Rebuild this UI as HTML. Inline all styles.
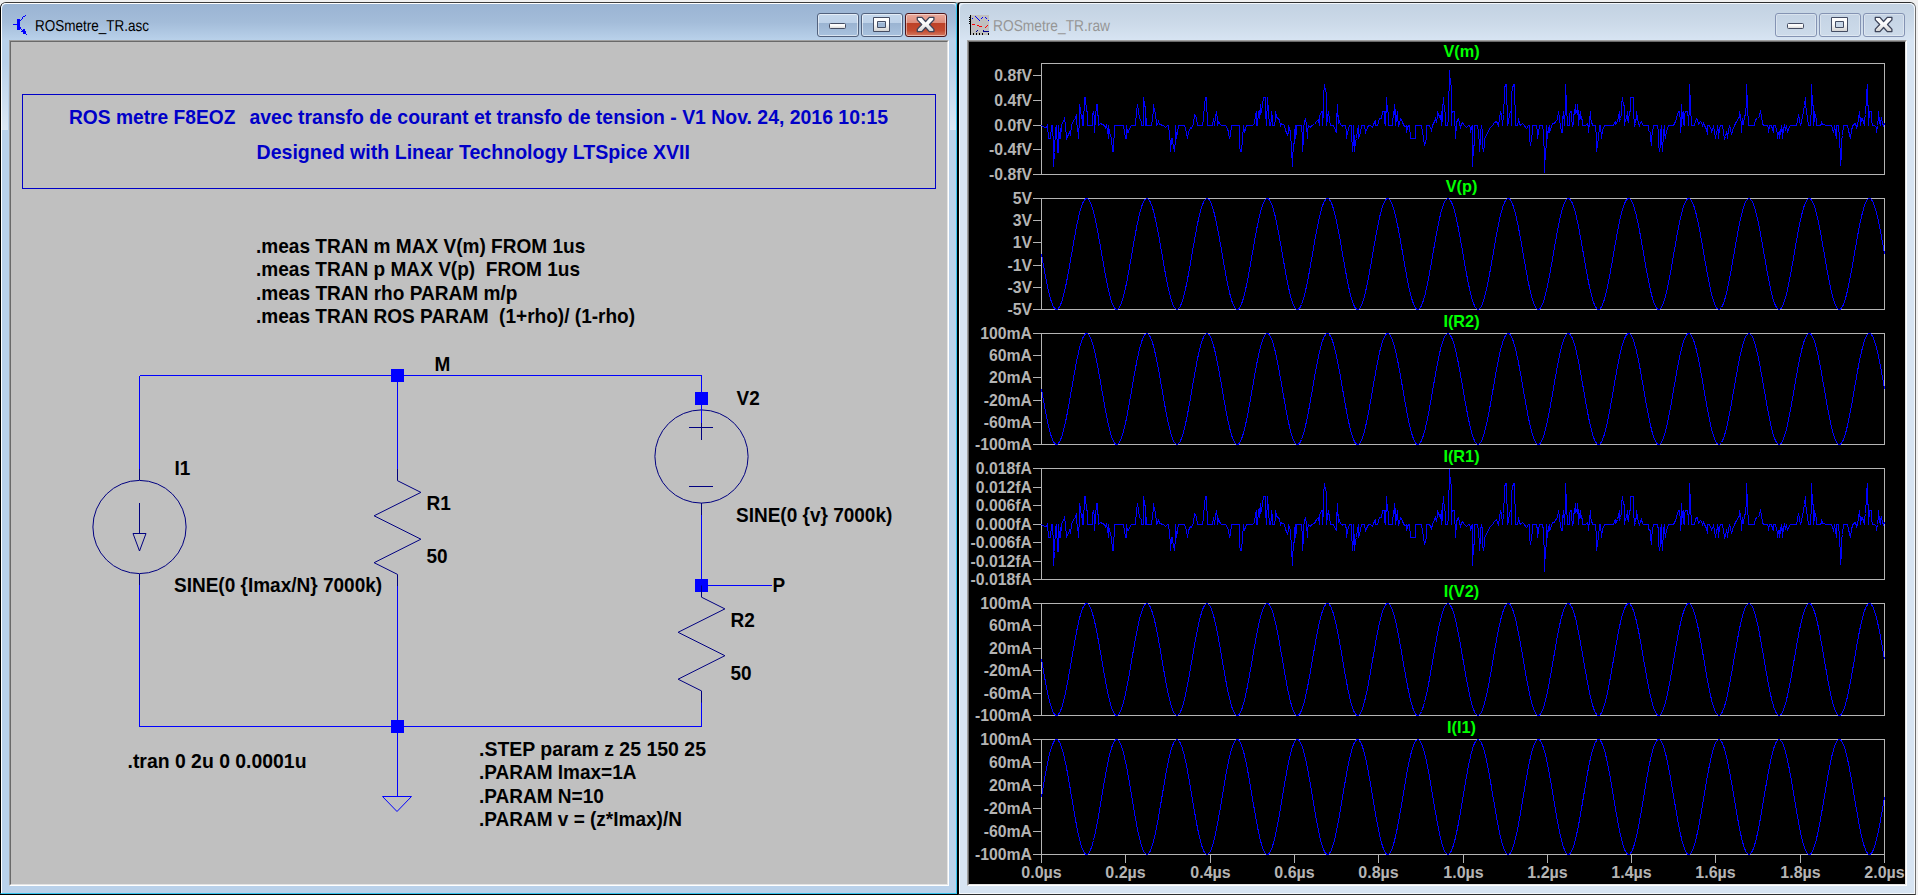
<!DOCTYPE html>
<html><head><meta charset="utf-8"><title>LTspice XVII - ROSmetre_TR</title>
<style>
html,body{margin:0;padding:0;}
body{width:1918px;height:895px;overflow:hidden;background:#f0f0f0;position:relative;font-family:"Liberation Sans",sans-serif;}
.win{position:absolute;box-sizing:border-box;}
#w1{left:0;top:2px;width:957px;height:892px;background:#b9d1ea;border-top:1px solid #3c3c3c;border-left:1px solid #000;border-right:1px solid #35c4ee;border-bottom:1px solid #35c4ee;border-radius:6px 3px 0 0;}
#w1 .hl{position:absolute;left:0;top:0;right:0;bottom:0;border-left:1px solid #fff;border-top:1px solid #fff;border-radius:5px 2px 0 0;}
#w1 .tb{position:absolute;left:1px;right:0;top:1px;height:36px;background:linear-gradient(#9ab4d3,#a3bcd9 50%,#b9d1ea);border-radius:5px 5px 0 0;}
#w2{left:957px;top:2px;width:959px;height:893px;background:#d7e4f2;border:1px solid #2e2e2e;border-right-color:#6e6e6e;border-left:2px solid #000;border-radius:4px 6px 0 0;}
#w2 .hl{position:absolute;left:0;top:0;right:0;bottom:0;border:1px solid #f4f8fc;border-radius:3px 5px 0 0;}
#w2 .tb{position:absolute;left:1px;right:1px;top:1px;height:36px;background:linear-gradient(#c3d2e2,#cbd9e8 50%,#d7e4f2);border-radius:5px 5px 0 0;}
.title{position:absolute;top:16px;font-size:13.5px;line-height:16px;white-space:pre;}
.client{position:absolute;box-sizing:border-box;}
.glow{position:absolute;top:62px;width:6px;height:68px;background:linear-gradient(rgba(255,255,255,0),rgba(255,255,255,.5));}
#c1{left:9px;top:40px;width:940px;height:846px;background:#c0c0c0;border:1px solid;border-color:#a0a0a0 #fff #fff #a0a0a0;}
#c2{left:967px;top:40px;width:940px;height:846px;background:#000;border:1px solid;border-color:#a0a0a0 #fff #fff #a0a0a0;}
.client i{position:absolute;left:0;top:0;right:0;bottom:0;border:1px solid;border-color:#696969 #e3e3e3 #e3e3e3 #696969;}
.btn{position:absolute;top:13px;width:42px;height:24px;box-sizing:border-box;border-radius:3px;overflow:hidden;}
.btn svg{position:absolute;left:-1px;top:-1px;}
.btn.act{border:1px solid #52627e;box-shadow:inset 0 0 0 1px rgba(255,255,255,.55);background:linear-gradient(#c4d7ec 0,#bdd1e8 42%,#9bb4d2 43%,#a9c2de 100%);}
.btn.close.act{border:1px solid #4d1418;box-shadow:inset 0 0 0 1px rgba(255,255,255,.45);background:linear-gradient(#eaaa9d 0,#dd8b79 42%,#bd4127 43%,#c34a2f 75%,#d57a60 100%);}
.btn.inact{border:1px solid #8493b3;box-shadow:inset 0 0 0 1px rgba(255,255,255,.35);background:linear-gradient(#c4d3e4,#cddbea);}
svg text{font-family:"Liberation Sans",sans-serif;font-weight:bold;}
svg.ttl text{font-weight:normal;text-rendering:geometricPrecision;}
#sch,#plt{position:absolute;left:0;top:0;}
</style></head><body>
<svg style="position:absolute;left:953px;top:2px" width="10" height="5" viewBox="0 0 10 5"><path d="M0.5 0 H9.5 L5 4.6 Z" fill="#b4b4b4"/></svg>
<div class="win" id="w1"><div class="tb"></div><div class="hl"></div></div>
<div class="win" id="w2"><div class="tb"></div><div class="hl"></div></div>
<div style="position:absolute;left:0;top:894px;width:958px;height:1px;background:#000"></div>
<div class="glow" style="left:2px"></div><div class="glow" style="left:950px"></div>
<div class="client" id="c1"><i></i></div>
<div class="client" id="c2"><i></i></div>
<svg style="position:absolute;left:12px;top:14px" width="16" height="22" viewBox="0 0 16 22" shape-rendering="crispEdges"><rect x="5" y="5" width="3" height="11" fill="#0000ff"/><rect x="1" y="10" width="4" height="1" fill="#0000ff"/><rect x="8" y="6" width="1" height="1" fill="#0000ff"/><rect x="9" y="5" width="1" height="1" fill="#0000ff"/><rect x="10" y="4" width="1" height="1" fill="#0000ff"/><rect x="10" y="3" width="1" height="1" fill="#0000ff"/><rect x="11" y="2" width="1" height="1" fill="#0000ff"/><rect x="12" y="2" width="1" height="1" fill="#0000ff"/><rect x="13" y="1" width="1" height="1" fill="#0000ff"/><rect x="8" y="13" width="1" height="2" fill="#0000ff"/><rect x="9" y="15" width="1" height="1" fill="#0000ff"/><rect x="11" y="15" width="2" height="1" fill="#0000ff"/><rect x="10" y="16" width="3" height="1" fill="#0000ff"/><rect x="9" y="17" width="5" height="1" fill="#0000ff"/><rect x="11" y="18" width="3" height="2" fill="#0000ff"/><rect x="14" y="20" width="1" height="1" fill="#0000ff"/></svg>
<svg class="ttl" style="position:absolute;left:30px;top:12px" width="140" height="26"><text x="5" y="19" font-size="15.8" fill="#000" textLength="114" lengthAdjust="spacingAndGlyphs">ROSmetre_TR.asc</text></svg>
<svg style="position:absolute;left:969px;top:15px" width="20" height="20" viewBox="0 0 20 20" shape-rendering="crispEdges"><rect x="2" y="0" width="18" height="20" fill="#c0c0c0"/><rect x="1" y="0" width="1" height="20" fill="#000"/><rect x="0" y="2" width="1" height="1" fill="#000"/><rect x="0" y="4" width="1" height="1" fill="#000"/><rect x="0" y="6" width="1" height="1" fill="#000"/><rect x="0" y="8" width="1" height="1" fill="#000"/><rect x="4" y="18" width="1" height="2" fill="#000"/><rect x="7" y="18" width="1" height="2" fill="#000"/><rect x="10" y="18" width="1" height="2" fill="#000"/><rect x="13" y="18" width="1" height="2" fill="#000"/><rect x="19" y="18" width="1" height="2" fill="#000"/><rect x="3" y="3" width="1" height="1" fill="#0000ff"/><rect x="6" y="1" width="1" height="1" fill="#0000ff"/><rect x="7" y="2" width="1" height="1" fill="#0000ff"/><rect x="8" y="3" width="1" height="1" fill="#0000ff"/><rect x="9" y="4" width="1" height="1" fill="#0000ff"/><rect x="10" y="5" width="1" height="1" fill="#0000ff"/><rect x="12" y="3" width="1" height="1" fill="#0000ff"/><rect x="13" y="2" width="1" height="1" fill="#0000ff"/><rect x="16" y="2" width="1" height="1" fill="#0000ff"/><rect x="17" y="3" width="1" height="1" fill="#0000ff"/><rect x="19" y="5" width="1" height="1" fill="#0000ff"/><rect x="3" y="9" width="1" height="1" fill="#ff0000"/><rect x="4" y="9" width="1" height="1" fill="#ff0000"/><rect x="5" y="9" width="1" height="1" fill="#ff0000"/><rect x="8" y="10" width="1" height="1" fill="#ff0000"/><rect x="9" y="10" width="1" height="1" fill="#ff0000"/><rect x="10" y="11" width="1" height="1" fill="#ff0000"/><rect x="11" y="11" width="1" height="1" fill="#ff0000"/><rect x="12" y="11" width="1" height="1" fill="#ff0000"/><rect x="16" y="12" width="1" height="1" fill="#ff0000"/><rect x="17" y="11" width="1" height="1" fill="#ff0000"/><rect x="18" y="10" width="1" height="1" fill="#ff0000"/><rect x="7" y="16" width="1" height="1" fill="#00008b"/><rect x="8" y="15" width="1" height="1" fill="#00008b"/><rect x="14" y="15" width="1" height="1" fill="#00008b"/><rect x="14" y="16" width="6" height="1" fill="#00008b"/></svg>
<svg class="ttl" style="position:absolute;left:988px;top:12px" width="140" height="26"><text x="5" y="19" font-size="15.8" fill="#969696" textLength="117" lengthAdjust="spacingAndGlyphs">ROSmetre_TR.raw</text></svg>
<svg width="0" height="0" style="position:absolute"><defs><linearGradient id="ga" x1="0" y1="0" x2="0" y2="1"><stop offset="0" stop-color="#fff"/><stop offset="0.45" stop-color="#fbfbfb"/><stop offset="1" stop-color="#d2d2d2"/></linearGradient></defs></svg><div class="btn min act" style="left:817px"><svg width="42" height="24" viewBox="0 0 42 24"><rect x="12.5" y="10.5" width="16" height="5" rx="1" fill="url(#ga)" stroke="#454d63"/></svg></div><div class="btn max act" style="left:861px"><svg width="42" height="24" viewBox="0 0 42 24"><path d="M12.5 4.5h16v14h-16z M16.5 8.5v6h8v-6z" fill="url(#ga)" fill-rule="evenodd" stroke="#454d63" stroke-linejoin="round"/></svg></div><div class="btn close act" style="left:905px"><svg width="42" height="24" viewBox="0 0 42 24"><path d="M12.3 6.9 V4.4 H16.9 L20.6 8.5 L24.3 4.4 H28.9 V6.9 L24.5 11.5 L28.9 16.1 V18.6 H24.3 L20.6 14.5 L16.9 18.6 H12.3 V16.1 L16.7 11.5 Z" fill="url(#ga)" stroke="#3d4459" stroke-width="1.3" stroke-linejoin="round"/></svg></div>
<svg width="0" height="0" style="position:absolute"><defs><linearGradient id="gi" x1="0" y1="0" x2="0" y2="1"><stop offset="0" stop-color="#fff"/><stop offset="0.45" stop-color="#fbfbfb"/><stop offset="1" stop-color="#d2d2d2"/></linearGradient></defs></svg><div class="btn min inact" style="left:1775px"><svg width="42" height="24" viewBox="0 0 42 24"><rect x="12.5" y="10.5" width="16" height="5" rx="1" fill="url(#gi)" stroke="#454d63"/></svg></div><div class="btn max inact" style="left:1819px"><svg width="42" height="24" viewBox="0 0 42 24"><path d="M12.5 4.5h16v14h-16z M16.5 8.5v6h8v-6z" fill="url(#gi)" fill-rule="evenodd" stroke="#454d63" stroke-linejoin="round"/></svg></div><div class="btn close inact" style="left:1863px"><svg width="42" height="24" viewBox="0 0 42 24"><path d="M12.3 6.9 V4.4 H16.9 L20.6 8.5 L24.3 4.4 H28.9 V6.9 L24.5 11.5 L28.9 16.1 V18.6 H24.3 L20.6 14.5 L16.9 18.6 H12.3 V16.1 L16.7 11.5 Z" fill="url(#gi)" stroke="#3d4459" stroke-width="1.3" stroke-linejoin="round"/></svg></div>
<svg id="sch" width="1918" height="895" viewBox="0 0 1918 895">
<rect x="22.5" y="94.5" width="913" height="94" fill="none" stroke="#0000c8" shape-rendering="crispEdges"/>
<text x="69" y="124" font-size="20.17" fill="#0000c8" textLength="166.5" lengthAdjust="spacingAndGlyphs" xml:space="preserve">ROS metre F8EOZ</text>
<text x="249.5" y="124" font-size="20.17" fill="#0000c8" textLength="638.5" lengthAdjust="spacingAndGlyphs" xml:space="preserve">avec transfo de courant et transfo de tension - V1 Nov. 24, 2016 10:15</text>
<text x="256.5" y="159" font-size="20.17" fill="#0000c8" textLength="433.5" lengthAdjust="spacingAndGlyphs" xml:space="preserve">Designed with Linear Technology LTSpice XVII</text>
<text x="256" y="253.0" font-size="19.85" fill="#000000" textLength="329.3" lengthAdjust="spacingAndGlyphs" xml:space="preserve">.meas TRAN m MAX V(m) FROM 1us</text>
<text x="256" y="276.45" font-size="19.85" fill="#000000" textLength="324.0" lengthAdjust="spacingAndGlyphs" xml:space="preserve">.meas TRAN p MAX V(p)  FROM 1us</text>
<text x="256" y="299.9" font-size="19.85" fill="#000000" textLength="261.4" lengthAdjust="spacingAndGlyphs" xml:space="preserve">.meas TRAN rho PARAM m/p</text>
<text x="256" y="323.35" font-size="19.85" fill="#000000" textLength="379.1" lengthAdjust="spacingAndGlyphs" xml:space="preserve">.meas TRAN ROS PARAM  (1+rho)/ (1-rho)</text>
<text x="479" y="756.0" font-size="19.85" fill="#000000" textLength="227" lengthAdjust="spacingAndGlyphs" xml:space="preserve">.STEP param z 25 150 25</text>
<text x="479" y="779.45" font-size="19.85" fill="#000000" textLength="157.5" lengthAdjust="spacingAndGlyphs" xml:space="preserve">.PARAM Imax=1A</text>
<text x="479" y="802.9" font-size="19.85" fill="#000000" textLength="124.8" lengthAdjust="spacingAndGlyphs" xml:space="preserve">.PARAM N=10</text>
<text x="479" y="826.35" font-size="19.85" fill="#000000" textLength="202.9" lengthAdjust="spacingAndGlyphs" xml:space="preserve">.PARAM v = (z*Imax)/N</text>
<text x="127.5" y="768" font-size="19.85" fill="#000000" textLength="179" lengthAdjust="spacingAndGlyphs" xml:space="preserve">.tran 0 2u 0 0.0001u</text>
<line x1="139.5" y1="375.5" x2="701.5" y2="375.5" stroke="#0000ff" stroke-width="1" shape-rendering="crispEdges"/>
<line x1="139.5" y1="726.5" x2="701.5" y2="726.5" stroke="#0000ff" stroke-width="1" shape-rendering="crispEdges"/>
<line x1="139.5" y1="375.5" x2="139.5" y2="469" stroke="#0000ff" stroke-width="1" shape-rendering="crispEdges"/>
<line x1="139.5" y1="585" x2="139.5" y2="726.5" stroke="#0000ff" stroke-width="1" shape-rendering="crispEdges"/>
<line x1="397.5" y1="375.5" x2="397.5" y2="469" stroke="#0000ff" stroke-width="1" shape-rendering="crispEdges"/>
<line x1="397.5" y1="585" x2="397.5" y2="796" stroke="#0000ff" stroke-width="1" shape-rendering="crispEdges"/>
<line x1="701.5" y1="375.5" x2="701.5" y2="423" stroke="#0000ff" stroke-width="1" shape-rendering="crispEdges"/>
<line x1="701.5" y1="515" x2="701.5" y2="585" stroke="#0000ff" stroke-width="1" shape-rendering="crispEdges"/>
<line x1="701.5" y1="585.5" x2="772" y2="585.5" stroke="#0000ff" stroke-width="1" shape-rendering="crispEdges"/>
<line x1="701.5" y1="702" x2="701.5" y2="726.5" stroke="#0000ff" stroke-width="1" shape-rendering="crispEdges"/>
<rect x="391" y="369" width="13" height="13" fill="#0000ff" shape-rendering="crispEdges"/>
<rect x="391" y="720" width="13" height="13" fill="#0000ff" shape-rendering="crispEdges"/>
<rect x="695" y="392" width="13" height="13" fill="#0000ff" shape-rendering="crispEdges"/>
<rect x="695" y="579" width="13" height="13" fill="#0000ff" shape-rendering="crispEdges"/>
<line x1="139.5" y1="469" x2="139.5" y2="480" stroke="#000080" stroke-width="1" shape-rendering="crispEdges"/>
<line x1="139.5" y1="574" x2="139.5" y2="585" stroke="#000080" stroke-width="1" shape-rendering="crispEdges"/>
<circle cx="139.5" cy="527" r="46.6" fill="none" stroke="#000080" stroke-width="1"/>
<line x1="139.5" y1="503" x2="139.5" y2="533" stroke="#000080" stroke-width="1" shape-rendering="crispEdges"/>
<path d="M133 533.5 L146 533.5 L139.5 551 Z" fill="none" stroke="#000080" stroke-width="1"/>
<line x1="701.5" y1="398" x2="701.5" y2="410" stroke="#000080" stroke-width="1" shape-rendering="crispEdges"/>
<line x1="701.5" y1="503" x2="701.5" y2="515" stroke="#000080" stroke-width="1" shape-rendering="crispEdges"/>
<circle cx="701.5" cy="456.5" r="46.6" fill="none" stroke="#000080" stroke-width="1"/>
<line x1="701.5" y1="415" x2="701.5" y2="440" stroke="#000080" stroke-width="1" shape-rendering="crispEdges"/>
<line x1="689" y1="427.5" x2="713" y2="427.5" stroke="#000080" stroke-width="1" shape-rendering="crispEdges"/>
<line x1="689" y1="486.5" x2="713" y2="486.5" stroke="#000080" stroke-width="1" shape-rendering="crispEdges"/>
<line x1="701.5" y1="375.5" x2="701.5" y2="423" stroke="#0000ff" stroke-width="1" shape-rendering="crispEdges"/>
<path d="M397.5 469.0 L397.5 480.7 L420.9 492.4 L374.1 515.8 L420.9 539.2 L374.1 562.7 L397.5 574.4 L397.5 586.1" fill="none" stroke="#000080" stroke-width="1"/>
<path d="M701.5 585.5 L701.5 597.2 L724.9 608.9 L678.1 632.3 L724.9 655.7 L678.1 679.2 L701.5 690.9 L701.5 702.6" fill="none" stroke="#000080" stroke-width="1"/>
<path d="M382.5 796.5 L411.5 796.5 L397 811.5 Z" fill="none" stroke="#0000ff" stroke-width="1"/>
<text x="434.5" y="371" font-size="19.85" fill="#000000" textLength="15.8" lengthAdjust="spacingAndGlyphs" xml:space="preserve">M</text>
<text x="772.5" y="592" font-size="19.85" fill="#000000" textLength="12.7" lengthAdjust="spacingAndGlyphs" xml:space="preserve">P</text>
<text x="174.5" y="474.5" font-size="19.85" fill="#000000" textLength="15.8" lengthAdjust="spacingAndGlyphs" xml:space="preserve">I1</text>
<text x="174" y="592" font-size="19.85" fill="#000000" textLength="208.1" lengthAdjust="spacingAndGlyphs" xml:space="preserve">SINE(0 {Imax/N} 7000k)</text>
<text x="426.5" y="510" font-size="19.85" fill="#000000" textLength="24.3" lengthAdjust="spacingAndGlyphs" xml:space="preserve">R1</text>
<text x="426.5" y="562.5" font-size="19.85" fill="#000000" textLength="21.1" lengthAdjust="spacingAndGlyphs" xml:space="preserve">50</text>
<text x="736.5" y="404.5" font-size="19.85" fill="#000000" textLength="23.2" lengthAdjust="spacingAndGlyphs" xml:space="preserve">V2</text>
<text x="736" y="522" font-size="19.85" fill="#000000" textLength="156.3" lengthAdjust="spacingAndGlyphs" xml:space="preserve">SINE(0 {v} 7000k)</text>
<text x="730.5" y="627" font-size="19.85" fill="#000000" textLength="24.3" lengthAdjust="spacingAndGlyphs" xml:space="preserve">R2</text>
<text x="730.5" y="680" font-size="19.85" fill="#000000" textLength="21.1" lengthAdjust="spacingAndGlyphs" xml:space="preserve">50</text>
</svg>
<svg id="plt" width="1918" height="895" viewBox="0 0 1918 895">
<rect x="1041.5" y="63.5" width="843" height="111" fill="none" stroke="#b4b4b4" shape-rendering="crispEdges"/>
<line x1="1033" y1="75.5" x2="1041" y2="75.5" stroke="#b4b4b4" shape-rendering="crispEdges"/>
<text x="1032" y="81.0" font-size="15.8" fill="#b4b4b4" text-anchor="end">0.8fV</text>
<line x1="1033" y1="100.5" x2="1041" y2="100.5" stroke="#b4b4b4" shape-rendering="crispEdges"/>
<text x="1032" y="106.0" font-size="15.8" fill="#b4b4b4" text-anchor="end">0.4fV</text>
<line x1="1033" y1="125.5" x2="1041" y2="125.5" stroke="#b4b4b4" shape-rendering="crispEdges"/>
<text x="1032" y="131.0" font-size="15.8" fill="#b4b4b4" text-anchor="end">0.0fV</text>
<line x1="1033" y1="149.5" x2="1041" y2="149.5" stroke="#b4b4b4" shape-rendering="crispEdges"/>
<text x="1032" y="155.0" font-size="15.8" fill="#b4b4b4" text-anchor="end">-0.4fV</text>
<line x1="1033" y1="174.5" x2="1041" y2="174.5" stroke="#b4b4b4" shape-rendering="crispEdges"/>
<text x="1032" y="180.0" font-size="15.8" fill="#b4b4b4" text-anchor="end">-0.8fV</text>
<text x="1461.5" y="56.8" font-size="16.3" fill="#00ff00" text-anchor="middle">V(m)</text>
<path d="M1041.5 125.5 L1044.5 127.5 L1046.5 127.5 L1047.5 125.5 L1048.5 138.5 L1050.5 138.5 L1051.5 125.5 L1052.5 125.5 L1053.5 145.5 L1053.5 166.5 L1054.5 152.5 L1055.5 128.5 L1056.5 125.5 L1057.5 152.5 L1058.5 152.5 L1058.5 125.5 L1059.5 138.5 L1060.5 128.5 L1060.5 138.5 L1061.5 125.5 L1064.5 118.5 L1064.5 118.5 L1065.5 125.5 L1066.5 138.5 L1069.5 132.5 L1070.5 134.5 L1071.5 125.5 L1073.5 120.5 L1075.5 118.5 L1076.5 114.5 L1076.5 120.5 L1077.5 128.5 L1078.5 134.5 L1078.5 138.5 L1079.5 118.5 L1079.5 104.5 L1080.5 108.5 L1081.5 118.5 L1082.5 115.5 L1082.5 125.5 L1083.5 125.5 L1084.5 97.5 L1085.5 97.5 L1086.5 111.5 L1087.5 111.5 L1087.5 125.5 L1092.5 125.5 L1092.5 115.5 L1093.5 111.5 L1094.5 118.5 L1094.5 132.5 L1095.5 118.5 L1096.5 104.5 L1097.5 104.5 L1097.5 115.5 L1098.5 115.5 L1098.5 125.5 L1100.5 123.5 L1102.5 124.5 L1104.5 125.5 L1105.5 127.5 L1106.5 125.5 L1107.5 129.5 L1108.5 138.5 L1108.5 125.5 L1109.5 132.5 L1111.5 138.5 L1112.5 151.5 L1113.5 151.5 L1114.5 125.5 L1123.5 125.5 L1125.5 138.5 L1126.5 138.5 L1126.5 125.5 L1127.5 132.5 L1128.5 132.5 L1129.5 128.5 L1131.5 125.5 L1135.5 125.5 L1136.5 111.5 L1137.5 104.5 L1138.5 111.5 L1139.5 118.5 L1141.5 121.5 L1141.5 125.5 L1143.5 125.5 L1143.5 111.5 L1143.5 97.5 L1144.5 104.5 L1145.5 108.5 L1145.5 125.5 L1146.5 118.5 L1146.5 125.5 L1151.5 125.5 L1153.5 110.5 L1153.5 104.5 L1154.5 111.5 L1155.5 112.5 L1156.5 125.5 L1157.5 124.5 L1158.5 121.5 L1159.5 124.5 L1163.5 125.5 L1165.5 127.5 L1167.5 125.5 L1168.5 125.5 L1169.5 134.5 L1170.5 145.5 L1170.5 151.5 L1171.5 138.5 L1172.5 138.5 L1172.5 138.5 L1173.5 148.5 L1174.5 145.5 L1174.5 151.5 L1175.5 138.5 L1175.5 125.5 L1176.5 138.5 L1177.5 132.5 L1178.5 125.5 L1184.5 125.5 L1186.5 132.5 L1187.5 138.5 L1188.5 132.5 L1190.5 127.5 L1191.5 128.5 L1193.5 123.5 L1194.5 114.5 L1196.5 117.5 L1197.5 125.5 L1202.5 125.5 L1203.5 118.5 L1204.5 104.5 L1205.5 97.5 L1206.5 97.5 L1206.5 111.5 L1207.5 112.5 L1207.5 125.5 L1212.5 125.5 L1213.5 118.5 L1214.5 125.5 L1215.5 116.5 L1216.5 111.5 L1217.5 119.5 L1217.5 125.5 L1218.5 121.5 L1220.5 124.5 L1221.5 125.5 L1225.5 125.5 L1227.5 128.5 L1228.5 132.5 L1229.5 138.5 L1230.5 134.5 L1231.5 125.5 L1239.5 125.5 L1239.5 145.5 L1240.5 151.5 L1241.5 151.5 L1242.5 138.5 L1243.5 125.5 L1244.5 132.5 L1246.5 125.5 L1248.5 125.5 L1250.5 125.5 L1250.5 125.5 L1252.5 125.5 L1254.5 123.5 L1255.5 114.5 L1256.5 111.5 L1256.5 125.5 L1257.5 125.5 L1258.5 111.5 L1259.5 110.5 L1259.5 118.5 L1260.5 104.5 L1260.5 114.5 L1261.5 111.5 L1262.5 104.5 L1263.5 97.5 L1265.5 97.5 L1265.5 111.5 L1266.5 125.5 L1266.5 111.5 L1266.5 118.5 L1267.5 104.5 L1267.5 97.5 L1268.5 111.5 L1268.5 111.5 L1269.5 125.5 L1270.5 125.5 L1271.5 118.5 L1271.5 111.5 L1272.5 118.5 L1272.5 125.5 L1274.5 125.5 L1275.5 118.5 L1275.5 111.5 L1276.5 116.5 L1277.5 118.5 L1279.5 119.5 L1280.5 125.5 L1281.5 123.5 L1284.5 125.5 L1285.5 130.5 L1287.5 134.5 L1288.5 132.5 L1288.5 125.5 L1289.5 128.5 L1290.5 132.5 L1291.5 149.5 L1292.5 166.5 L1292.5 158.5 L1293.5 145.5 L1294.5 141.5 L1294.5 132.5 L1295.5 125.5 L1295.5 138.5 L1296.5 132.5 L1296.5 125.5 L1301.5 125.5 L1302.5 138.5 L1302.5 151.5 L1303.5 138.5 L1303.5 128.5 L1304.5 122.5 L1305.5 118.5 L1306.5 125.5 L1307.5 138.5 L1307.5 130.5 L1308.5 125.5 L1310.5 127.5 L1311.5 125.5 L1314.5 124.5 L1316.5 121.5 L1318.5 119.5 L1319.5 125.5 L1319.5 116.5 L1321.5 111.5 L1322.5 111.5 L1322.5 125.5 L1323.5 111.5 L1323.5 95.5 L1324.5 84.5 L1325.5 91.5 L1326.5 92.5 L1326.5 125.5 L1327.5 114.5 L1327.5 121.5 L1328.5 111.5 L1329.5 119.5 L1330.5 125.5 L1333.5 125.5 L1335.5 130.5 L1336.5 132.5 L1336.5 121.5 L1337.5 104.5 L1337.5 116.5 L1338.5 115.5 L1338.5 123.5 L1339.5 121.5 L1340.5 124.5 L1342.5 126.5 L1342.5 125.5 L1345.5 125.5 L1346.5 132.5 L1346.5 138.5 L1347.5 132.5 L1349.5 125.5 L1351.5 125.5 L1351.5 138.5 L1352.5 145.5 L1352.5 151.5 L1353.5 141.5 L1353.5 125.5 L1354.5 144.5 L1354.5 151.5 L1355.5 141.5 L1356.5 138.5 L1357.5 130.5 L1358.5 125.5 L1358.5 138.5 L1360.5 132.5 L1361.5 125.5 L1364.5 125.5 L1365.5 132.5 L1367.5 127.5 L1368.5 125.5 L1370.5 125.5 L1372.5 127.5 L1373.5 124.5 L1375.5 120.5 L1375.5 125.5 L1377.5 125.5 L1379.5 118.5 L1381.5 118.5 L1382.5 111.5 L1384.5 111.5 L1384.5 121.5 L1385.5 125.5 L1385.5 111.5 L1386.5 112.5 L1386.5 97.5 L1387.5 111.5 L1388.5 112.5 L1388.5 125.5 L1392.5 125.5 L1393.5 111.5 L1394.5 114.5 L1394.5 104.5 L1395.5 112.5 L1395.5 125.5 L1396.5 118.5 L1397.5 111.5 L1397.5 116.5 L1398.5 125.5 L1399.5 123.5 L1400.5 118.5 L1402.5 121.5 L1403.5 125.5 L1405.5 126.5 L1406.5 125.5 L1406.5 132.5 L1407.5 127.5 L1408.5 125.5 L1409.5 125.5 L1410.5 138.5 L1415.5 138.5 L1415.5 125.5 L1421.5 125.5 L1423.5 138.5 L1424.5 145.5 L1426.5 138.5 L1426.5 125.5 L1429.5 125.5 L1431.5 130.5 L1432.5 125.5 L1434.5 121.5 L1435.5 118.5 L1436.5 122.5 L1437.5 116.5 L1437.5 111.5 L1438.5 114.5 L1439.5 116.5 L1440.5 118.5 L1441.5 111.5 L1441.5 125.5 L1442.5 118.5 L1442.5 104.5 L1443.5 104.5 L1443.5 97.5 L1444.5 111.5 L1445.5 112.5 L1445.5 125.5 L1447.5 125.5 L1448.5 118.5 L1448.5 91.5 L1449.5 90.5 L1449.5 70.5 L1450.5 84.5 L1451.5 85.5 L1451.5 125.5 L1451.5 114.5 L1452.5 111.5 L1454.5 111.5 L1454.5 118.5 L1455.5 132.5 L1455.5 138.5 L1456.5 123.5 L1457.5 119.5 L1458.5 118.5 L1459.5 123.5 L1460.5 128.5 L1460.5 125.5 L1460.5 126.5 L1462.5 122.5 L1464.5 125.5 L1466.5 127.5 L1466.5 127.5 L1468.5 125.5 L1469.5 125.5 L1470.5 128.5 L1470.5 132.5 L1471.5 127.5 L1472.5 125.5 L1472.5 145.5 L1472.5 166.5 L1473.5 145.5 L1474.5 145.5 L1474.5 125.5 L1477.5 125.5 L1478.5 132.5 L1479.5 145.5 L1479.5 151.5 L1480.5 138.5 L1480.5 132.5 L1481.5 125.5 L1482.5 132.5 L1482.5 145.5 L1483.5 151.5 L1484.5 145.5 L1484.5 138.5 L1486.5 135.5 L1488.5 130.5 L1490.5 127.5 L1492.5 125.5 L1494.5 122.5 L1496.5 121.5 L1497.5 123.5 L1498.5 125.5 L1499.5 118.5 L1500.5 111.5 L1501.5 114.5 L1501.5 114.5 L1502.5 125.5 L1503.5 114.5 L1504.5 94.5 L1504.5 88.5 L1505.5 84.5 L1506.5 84.5 L1506.5 104.5 L1507.5 105.5 L1507.5 125.5 L1508.5 121.5 L1509.5 114.5 L1510.5 111.5 L1511.5 111.5 L1511.5 125.5 L1511.5 94.5 L1512.5 88.5 L1513.5 84.5 L1514.5 84.5 L1514.5 104.5 L1515.5 105.5 L1515.5 125.5 L1517.5 125.5 L1518.5 121.5 L1518.5 118.5 L1519.5 123.5 L1520.5 125.5 L1522.5 123.5 L1524.5 125.5 L1525.5 127.5 L1526.5 128.5 L1528.5 125.5 L1529.5 125.5 L1529.5 138.5 L1530.5 145.5 L1531.5 138.5 L1532.5 132.5 L1532.5 125.5 L1536.5 125.5 L1537.5 132.5 L1537.5 138.5 L1538.5 132.5 L1539.5 125.5 L1542.5 125.5 L1543.5 132.5 L1543.5 135.5 L1544.5 155.5 L1544.5 172.5 L1545.5 148.5 L1546.5 147.5 L1546.5 125.5 L1547.5 135.5 L1547.5 138.5 L1548.5 128.5 L1549.5 125.5 L1549.5 132.5 L1550.5 129.5 L1552.5 123.5 L1554.5 123.5 L1555.5 121.5 L1557.5 119.5 L1558.5 111.5 L1559.5 118.5 L1559.5 119.5 L1560.5 125.5 L1561.5 132.5 L1562.5 132.5 L1562.5 120.5 L1563.5 111.5 L1563.5 118.5 L1564.5 116.5 L1564.5 125.5 L1565.5 105.5 L1565.5 84.5 L1566.5 105.5 L1566.5 105.5 L1567.5 125.5 L1569.5 125.5 L1569.5 114.5 L1570.5 111.5 L1571.5 111.5 L1571.5 118.5 L1572.5 125.5 L1573.5 123.5 L1573.5 114.5 L1574.5 114.5 L1575.5 104.5 L1575.5 113.5 L1576.5 111.5 L1577.5 114.5 L1577.5 104.5 L1578.5 114.5 L1578.5 125.5 L1579.5 114.5 L1580.5 118.5 L1580.5 111.5 L1581.5 119.5 L1582.5 119.5 L1582.5 125.5 L1584.5 125.5 L1585.5 125.5 L1587.5 123.5 L1588.5 127.5 L1588.5 132.5 L1589.5 121.5 L1590.5 111.5 L1590.5 118.5 L1591.5 121.5 L1592.5 125.5 L1595.5 125.5 L1596.5 138.5 L1596.5 151.5 L1597.5 144.5 L1598.5 138.5 L1599.5 125.5 L1600.5 125.5 L1601.5 138.5 L1602.5 130.5 L1604.5 125.5 L1613.5 125.5 L1614.5 122.5 L1615.5 121.5 L1615.5 124.5 L1617.5 121.5 L1618.5 116.5 L1619.5 111.5 L1619.5 121.5 L1620.5 118.5 L1621.5 114.5 L1621.5 105.5 L1622.5 97.5 L1623.5 105.5 L1624.5 105.5 L1624.5 125.5 L1625.5 119.5 L1626.5 118.5 L1627.5 111.5 L1627.5 119.5 L1628.5 121.5 L1629.5 111.5 L1630.5 111.5 L1630.5 97.5 L1633.5 97.5 L1633.5 111.5 L1633.5 112.5 L1634.5 125.5 L1635.5 123.5 L1636.5 115.5 L1636.5 111.5 L1637.5 118.5 L1638.5 123.5 L1639.5 125.5 L1640.5 122.5 L1641.5 121.5 L1642.5 124.5 L1643.5 125.5 L1645.5 125.5 L1648.5 125.5 L1648.5 130.5 L1650.5 132.5 L1650.5 138.5 L1651.5 145.5 L1651.5 138.5 L1652.5 132.5 L1653.5 125.5 L1657.5 125.5 L1658.5 132.5 L1658.5 144.5 L1659.5 151.5 L1660.5 144.5 L1660.5 132.5 L1661.5 125.5 L1661.5 138.5 L1662.5 151.5 L1663.5 132.5 L1664.5 125.5 L1664.5 132.5 L1665.5 138.5 L1666.5 130.5 L1667.5 129.5 L1668.5 125.5 L1670.5 125.5 L1670.5 125.5 L1673.5 125.5 L1675.5 121.5 L1677.5 114.5 L1678.5 111.5 L1679.5 111.5 L1680.5 121.5 L1680.5 132.5 L1681.5 121.5 L1681.5 104.5 L1682.5 118.5 L1683.5 111.5 L1683.5 123.5 L1684.5 125.5 L1684.5 114.5 L1685.5 111.5 L1687.5 111.5 L1688.5 119.5 L1688.5 125.5 L1689.5 105.5 L1689.5 84.5 L1690.5 105.5 L1690.5 105.5 L1691.5 125.5 L1694.5 125.5 L1695.5 121.5 L1696.5 118.5 L1697.5 119.5 L1698.5 124.5 L1700.5 121.5 L1701.5 122.5 L1702.5 125.5 L1703.5 123.5 L1704.5 125.5 L1706.5 129.5 L1707.5 134.5 L1707.5 125.5 L1709.5 125.5 L1711.5 130.5 L1711.5 132.5 L1713.5 126.5 L1714.5 130.5 L1715.5 138.5 L1715.5 138.5 L1716.5 131.5 L1717.5 130.5 L1717.5 125.5 L1718.5 132.5 L1718.5 138.5 L1719.5 128.5 L1720.5 125.5 L1722.5 125.5 L1723.5 132.5 L1724.5 138.5 L1725.5 136.5 L1726.5 132.5 L1727.5 134.5 L1727.5 138.5 L1728.5 130.5 L1729.5 125.5 L1730.5 129.5 L1731.5 134.5 L1732.5 130.5 L1734.5 125.5 L1736.5 121.5 L1738.5 118.5 L1739.5 116.5 L1739.5 111.5 L1740.5 116.5 L1741.5 125.5 L1741.5 132.5 L1742.5 118.5 L1743.5 124.5 L1743.5 123.5 L1744.5 116.5 L1745.5 114.5 L1746.5 101.5 L1746.5 97.5 L1746.5 84.5 L1747.5 105.5 L1747.5 105.5 L1748.5 125.5 L1754.5 125.5 L1755.5 119.5 L1757.5 118.5 L1759.5 116.5 L1759.5 114.5 L1760.5 111.5 L1761.5 116.5 L1762.5 123.5 L1763.5 125.5 L1764.5 125.5 L1767.5 125.5 L1768.5 128.5 L1768.5 132.5 L1769.5 125.5 L1771.5 125.5 L1772.5 129.5 L1773.5 132.5 L1773.5 125.5 L1775.5 125.5 L1776.5 130.5 L1777.5 133.5 L1777.5 138.5 L1778.5 132.5 L1779.5 131.5 L1779.5 138.5 L1780.5 132.5 L1781.5 125.5 L1781.5 131.5 L1782.5 129.5 L1782.5 138.5 L1783.5 128.5 L1784.5 125.5 L1785.5 129.5 L1785.5 130.5 L1786.5 125.5 L1787.5 132.5 L1788.5 128.5 L1790.5 125.5 L1796.5 125.5 L1797.5 121.5 L1798.5 114.5 L1799.5 119.5 L1800.5 125.5 L1801.5 122.5 L1802.5 116.5 L1803.5 111.5 L1804.5 105.5 L1805.5 97.5 L1805.5 103.5 L1806.5 111.5 L1807.5 118.5 L1808.5 125.5 L1810.5 125.5 L1811.5 105.5 L1811.5 84.5 L1812.5 105.5 L1813.5 105.5 L1813.5 125.5 L1814.5 118.5 L1814.5 111.5 L1815.5 116.5 L1816.5 119.5 L1816.5 125.5 L1820.5 125.5 L1821.5 123.5 L1821.5 121.5 L1822.5 124.5 L1824.5 124.5 L1825.5 125.5 L1827.5 125.5 L1831.5 125.5 L1832.5 128.5 L1833.5 132.5 L1834.5 127.5 L1834.5 125.5 L1835.5 132.5 L1836.5 138.5 L1836.5 125.5 L1838.5 125.5 L1839.5 138.5 L1840.5 156.5 L1840.5 165.5 L1841.5 155.5 L1841.5 140.5 L1842.5 135.5 L1843.5 125.5 L1847.5 125.5 L1848.5 130.5 L1849.5 134.5 L1850.5 138.5 L1851.5 130.5 L1852.5 126.5 L1853.5 124.5 L1855.5 123.5 L1856.5 127.5 L1857.5 125.5 L1858.5 118.5 L1859.5 111.5 L1859.5 116.5 L1860.5 118.5 L1860.5 125.5 L1861.5 118.5 L1862.5 118.5 L1863.5 122.5 L1864.5 125.5 L1864.5 119.5 L1865.5 114.5 L1866.5 97.5 L1866.5 94.5 L1867.5 84.5 L1867.5 105.5 L1868.5 105.5 L1868.5 125.5 L1869.5 111.5 L1871.5 111.5 L1871.5 119.5 L1872.5 125.5 L1874.5 125.5 L1876.5 127.5 L1876.5 132.5 L1877.5 125.5 L1878.5 116.5 L1878.5 111.5 L1879.5 121.5 L1880.5 125.5 L1880.5 121.5 L1881.5 118.5 L1882.5 123.5 L1883.5 125.5 L1884.5 123.5" fill="none" stroke="#0000ff" stroke-width="1" shape-rendering="crispEdges"/>
<rect x="1041.5" y="198.5" width="843" height="111" fill="none" stroke="#b4b4b4" shape-rendering="crispEdges"/>
<line x1="1033" y1="198.5" x2="1041" y2="198.5" stroke="#b4b4b4" shape-rendering="crispEdges"/>
<text x="1032" y="204.0" font-size="15.8" fill="#b4b4b4" text-anchor="end">5V</text>
<line x1="1033" y1="220.5" x2="1041" y2="220.5" stroke="#b4b4b4" shape-rendering="crispEdges"/>
<text x="1032" y="226.0" font-size="15.8" fill="#b4b4b4" text-anchor="end">3V</text>
<line x1="1033" y1="242.5" x2="1041" y2="242.5" stroke="#b4b4b4" shape-rendering="crispEdges"/>
<text x="1032" y="248.0" font-size="15.8" fill="#b4b4b4" text-anchor="end">1V</text>
<line x1="1033" y1="265.5" x2="1041" y2="265.5" stroke="#b4b4b4" shape-rendering="crispEdges"/>
<text x="1032" y="271.0" font-size="15.8" fill="#b4b4b4" text-anchor="end">-1V</text>
<line x1="1033" y1="287.5" x2="1041" y2="287.5" stroke="#b4b4b4" shape-rendering="crispEdges"/>
<text x="1032" y="293.0" font-size="15.8" fill="#b4b4b4" text-anchor="end">-3V</text>
<line x1="1033" y1="309.5" x2="1041" y2="309.5" stroke="#b4b4b4" shape-rendering="crispEdges"/>
<text x="1032" y="315.0" font-size="15.8" fill="#b4b4b4" text-anchor="end">-5V</text>
<text x="1461.5" y="191.8" font-size="16.3" fill="#00ff00" text-anchor="middle">V(p)</text>
<path d="M1041.5 254.0 L1042.5 259.8 L1043.5 265.5 L1044.5 271.1 L1045.5 276.5 L1046.5 281.7 L1047.5 286.5 L1048.5 291.0 L1049.5 295.1 L1050.5 298.8 L1051.5 302.0 L1052.5 304.6 L1053.5 306.7 L1054.5 308.2 L1055.5 309.2 L1056.5 309.5 L1057.5 309.2 L1058.5 308.4 L1059.5 306.9 L1060.5 304.9 L1061.5 302.3 L1062.5 299.2 L1063.5 295.5 L1064.5 291.5 L1065.5 287.0 L1066.5 282.2 L1067.5 277.1 L1068.5 271.7 L1069.5 266.1 L1070.5 260.4 L1071.5 254.6 L1072.5 248.8 L1073.5 243.1 L1074.5 237.5 L1075.5 232.1 L1076.5 226.9 L1077.5 222.0 L1078.5 217.4 L1079.5 213.3 L1080.5 209.6 L1081.5 206.4 L1082.5 203.6 L1083.5 201.5 L1084.5 199.9 L1085.5 198.9 L1086.5 198.5 L1087.5 198.7 L1088.5 199.5 L1089.5 200.9 L1090.5 202.9 L1091.5 205.4 L1092.5 208.5 L1093.5 212.0 L1094.5 216.1 L1095.5 220.5 L1096.5 225.3 L1097.5 230.4 L1098.5 235.7 L1099.5 241.3 L1100.5 247.0 L1101.5 252.8 L1102.5 258.5 L1103.5 264.3 L1104.5 269.9 L1105.5 275.4 L1106.5 280.6 L1107.5 285.5 L1108.5 290.1 L1109.5 294.3 L1110.5 298.0 L1111.5 301.3 L1112.5 304.1 L1113.5 306.3 L1114.5 308.0 L1115.5 309.0 L1116.5 309.5 L1117.5 309.3 L1118.5 308.6 L1119.5 307.3 L1120.5 305.3 L1121.5 302.9 L1122.5 299.9 L1123.5 296.4 L1124.5 292.4 L1125.5 288.0 L1126.5 283.3 L1127.5 278.2 L1128.5 272.9 L1129.5 267.3 L1130.5 261.6 L1131.5 255.9 L1132.5 250.1 L1133.5 244.3 L1134.5 238.7 L1135.5 233.2 L1136.5 228.0 L1137.5 223.0 L1138.5 218.4 L1139.5 214.1 L1140.5 210.3 L1141.5 207.0 L1142.5 204.2 L1143.5 201.9 L1144.5 200.2 L1145.5 199.1 L1146.5 198.5 L1147.5 198.6 L1148.5 199.3 L1149.5 200.6 L1150.5 202.4 L1151.5 204.8 L1152.5 207.8 L1153.5 211.2 L1154.5 215.2 L1155.5 219.5 L1156.5 224.2 L1157.5 229.3 L1158.5 234.6 L1159.5 240.1 L1160.5 245.8 L1161.5 251.5 L1162.5 257.3 L1163.5 263.1 L1164.5 268.7 L1165.5 274.2 L1166.5 279.5 L1167.5 284.5 L1168.5 289.1 L1169.5 293.4 L1170.5 297.3 L1171.5 300.7 L1172.5 303.5 L1173.5 305.9 L1174.5 307.6 L1175.5 308.8 L1176.5 309.4 L1177.5 309.4 L1178.5 308.8 L1179.5 307.6 L1180.5 305.8 L1181.5 303.4 L1182.5 300.6 L1183.5 297.2 L1184.5 293.3 L1185.5 289.0 L1186.5 284.3 L1187.5 279.3 L1188.5 274.0 L1189.5 268.5 L1190.5 262.9 L1191.5 257.1 L1192.5 251.3 L1193.5 245.6 L1194.5 239.9 L1195.5 234.4 L1196.5 229.1 L1197.5 224.0 L1198.5 219.3 L1199.5 215.0 L1200.5 211.1 L1201.5 207.7 L1202.5 204.7 L1203.5 202.3 L1204.5 200.5 L1205.5 199.3 L1206.5 198.6 L1207.5 198.6 L1208.5 199.1 L1209.5 200.2 L1210.5 202.0 L1211.5 204.3 L1212.5 207.1 L1213.5 210.5 L1214.5 214.3 L1215.5 218.5 L1216.5 223.2 L1217.5 228.2 L1218.5 233.4 L1219.5 238.9 L1220.5 244.5 L1221.5 250.3 L1222.5 256.1 L1223.5 261.8 L1224.5 267.5 L1225.5 273.0 L1226.5 278.4 L1227.5 283.4 L1228.5 288.2 L1229.5 292.5 L1230.5 296.5 L1231.5 300.0 L1232.5 303.0 L1233.5 305.4 L1234.5 307.3 L1235.5 308.6 L1236.5 309.4 L1237.5 309.5 L1238.5 309.0 L1239.5 307.9 L1240.5 306.2 L1241.5 304.0 L1242.5 301.2 L1243.5 297.9 L1244.5 294.1 L1245.5 289.9 L1246.5 285.3 L1247.5 280.4 L1248.5 275.2 L1249.5 269.7 L1250.5 264.1 L1251.5 258.3 L1252.5 252.6 L1253.5 246.8 L1254.5 241.1 L1255.5 235.5 L1256.5 230.2 L1257.5 225.1 L1258.5 220.3 L1259.5 215.9 L1260.5 211.9 L1261.5 208.4 L1262.5 205.3 L1263.5 202.8 L1264.5 200.9 L1265.5 199.5 L1266.5 198.7 L1267.5 198.5 L1268.5 198.9 L1269.5 200.0 L1270.5 201.6 L1271.5 203.7 L1272.5 206.5 L1273.5 209.7 L1274.5 213.4 L1275.5 217.6 L1276.5 222.2 L1277.5 227.1 L1278.5 232.3 L1279.5 237.7 L1280.5 243.3 L1281.5 249.0 L1282.5 254.8 L1283.5 260.6 L1284.5 266.3 L1285.5 271.9 L1286.5 277.3 L1287.5 282.4 L1288.5 287.2 L1289.5 291.6 L1290.5 295.7 L1291.5 299.3 L1292.5 302.4 L1293.5 304.9 L1294.5 307.0 L1295.5 308.4 L1296.5 309.2 L1297.5 309.5 L1298.5 309.1 L1299.5 308.2 L1300.5 306.6 L1301.5 304.5 L1302.5 301.9 L1303.5 298.7 L1304.5 295.0 L1305.5 290.9 L1306.5 286.4 L1307.5 281.5 L1308.5 276.3 L1309.5 270.9 L1310.5 265.3 L1311.5 259.6 L1312.5 253.8 L1313.5 248.0 L1314.5 242.3 L1315.5 236.7 L1316.5 231.3 L1317.5 226.2 L1318.5 221.3 L1319.5 216.8 L1320.5 212.7 L1321.5 209.1 L1322.5 205.9 L1323.5 203.3 L1324.5 201.2 L1325.5 199.7 L1326.5 198.8 L1327.5 198.5 L1328.5 198.8 L1329.5 199.7 L1330.5 201.2 L1331.5 203.2 L1332.5 205.8 L1333.5 209.0 L1334.5 212.6 L1335.5 216.7 L1336.5 221.1 L1337.5 226.0 L1338.5 231.1 L1339.5 236.5 L1340.5 242.1 L1341.5 247.8 L1342.5 253.6 L1343.5 259.4 L1344.5 265.1 L1345.5 270.7 L1346.5 276.1 L1347.5 281.3 L1348.5 286.2 L1349.5 290.7 L1350.5 294.9 L1351.5 298.5 L1352.5 301.8 L1353.5 304.4 L1354.5 306.6 L1355.5 308.1 L1356.5 309.1 L1357.5 309.5 L1358.5 309.3 L1359.5 308.4 L1360.5 307.0 L1361.5 305.0 L1362.5 302.5 L1363.5 299.4 L1364.5 295.8 L1365.5 291.8 L1366.5 287.4 L1367.5 282.6 L1368.5 277.4 L1369.5 272.1 L1370.5 266.5 L1371.5 260.8 L1372.5 255.0 L1373.5 249.2 L1374.5 243.5 L1375.5 237.9 L1376.5 232.5 L1377.5 227.2 L1378.5 222.3 L1379.5 217.7 L1380.5 213.6 L1381.5 209.8 L1382.5 206.6 L1383.5 203.8 L1384.5 201.6 L1385.5 200.0 L1386.5 199.0 L1387.5 198.5 L1388.5 198.7 L1389.5 199.4 L1390.5 200.8 L1391.5 202.7 L1392.5 205.2 L1393.5 208.3 L1394.5 211.8 L1395.5 215.8 L1396.5 220.2 L1397.5 224.9 L1398.5 230.0 L1399.5 235.3 L1400.5 240.9 L1401.5 246.6 L1402.5 252.3 L1403.5 258.1 L1404.5 263.9 L1405.5 269.5 L1406.5 275.0 L1407.5 280.2 L1408.5 285.2 L1409.5 289.8 L1410.5 294.0 L1411.5 297.8 L1412.5 301.1 L1413.5 303.9 L1414.5 306.2 L1415.5 307.9 L1416.5 309.0 L1417.5 309.5 L1418.5 309.4 L1419.5 308.7 L1420.5 307.4 L1421.5 305.5 L1422.5 303.1 L1423.5 300.1 L1424.5 296.6 L1425.5 292.7 L1426.5 288.3 L1427.5 283.6 L1428.5 278.6 L1429.5 273.2 L1430.5 267.7 L1431.5 262.0 L1432.5 256.3 L1433.5 250.5 L1434.5 244.7 L1435.5 239.1 L1436.5 233.6 L1437.5 228.3 L1438.5 223.3 L1439.5 218.7 L1440.5 214.4 L1441.5 210.6 L1442.5 207.2 L1443.5 204.4 L1444.5 202.1 L1445.5 200.3 L1446.5 199.1 L1447.5 198.6 L1448.5 198.6 L1449.5 199.2 L1450.5 200.5 L1451.5 202.3 L1452.5 204.6 L1453.5 207.6 L1454.5 211.0 L1455.5 214.9 L1456.5 219.2 L1457.5 223.9 L1458.5 228.9 L1459.5 234.2 L1460.5 239.7 L1461.5 245.3 L1462.5 251.1 L1463.5 256.9 L1464.5 262.7 L1465.5 268.3 L1466.5 273.8 L1467.5 279.1 L1468.5 284.1 L1469.5 288.8 L1470.5 293.1 L1471.5 297.0 L1472.5 300.4 L1473.5 303.4 L1474.5 305.7 L1475.5 307.5 L1476.5 308.8 L1477.5 309.4 L1478.5 309.4 L1479.5 308.9 L1480.5 307.7 L1481.5 305.9 L1482.5 303.6 L1483.5 300.8 L1484.5 297.4 L1485.5 293.6 L1486.5 289.3 L1487.5 284.7 L1488.5 279.7 L1489.5 274.4 L1490.5 268.9 L1491.5 263.3 L1492.5 257.5 L1493.5 251.7 L1494.5 246.0 L1495.5 240.3 L1496.5 234.8 L1497.5 229.4 L1498.5 224.4 L1499.5 219.7 L1500.5 215.3 L1501.5 211.4 L1502.5 207.9 L1503.5 204.9 L1504.5 202.5 L1505.5 200.6 L1506.5 199.3 L1507.5 198.6 L1508.5 198.5 L1509.5 199.0 L1510.5 200.1 L1511.5 201.8 L1512.5 204.1 L1513.5 206.9 L1514.5 210.2 L1515.5 214.0 L1516.5 218.2 L1517.5 222.8 L1518.5 227.8 L1519.5 233.0 L1520.5 238.5 L1521.5 244.1 L1522.5 249.9 L1523.5 255.7 L1524.5 261.4 L1525.5 267.1 L1526.5 272.7 L1527.5 278.0 L1528.5 283.1 L1529.5 287.8 L1530.5 292.2 L1531.5 296.2 L1532.5 299.7 L1533.5 302.8 L1534.5 305.3 L1535.5 307.2 L1536.5 308.6 L1537.5 309.3 L1538.5 309.5 L1539.5 309.0 L1540.5 308.0 L1541.5 306.4 L1542.5 304.2 L1543.5 301.4 L1544.5 298.2 L1545.5 294.4 L1546.5 290.3 L1547.5 285.7 L1548.5 280.8 L1549.5 275.5 L1550.5 270.1 L1551.5 264.5 L1552.5 258.8 L1553.5 253.0 L1554.5 247.2 L1555.5 241.5 L1556.5 235.9 L1557.5 230.6 L1558.5 225.4 L1559.5 220.6 L1560.5 216.2 L1561.5 212.2 L1562.5 208.6 L1563.5 205.5 L1564.5 203.0 L1565.5 201.0 L1566.5 199.6 L1567.5 198.7 L1568.5 198.5 L1569.5 198.9 L1570.5 199.9 L1571.5 201.4 L1572.5 203.6 L1573.5 206.2 L1574.5 209.5 L1575.5 213.1 L1576.5 217.3 L1577.5 221.8 L1578.5 226.7 L1579.5 231.9 L1580.5 237.3 L1581.5 242.9 L1582.5 248.6 L1583.5 254.4 L1584.5 260.2 L1585.5 265.9 L1586.5 271.5 L1587.5 276.9 L1588.5 282.0 L1589.5 286.9 L1590.5 291.3 L1591.5 295.4 L1592.5 299.0 L1593.5 302.2 L1594.5 304.8 L1595.5 306.8 L1596.5 308.3 L1597.5 309.2 L1598.5 309.5 L1599.5 309.2 L1600.5 308.3 L1601.5 306.8 L1602.5 304.7 L1603.5 302.1 L1604.5 298.9 L1605.5 295.3 L1606.5 291.2 L1607.5 286.7 L1608.5 281.8 L1609.5 276.7 L1610.5 271.3 L1611.5 265.7 L1612.5 260.0 L1613.5 254.2 L1614.5 248.4 L1615.5 242.7 L1616.5 237.1 L1617.5 231.7 L1618.5 226.5 L1619.5 221.6 L1620.5 217.1 L1621.5 213.0 L1622.5 209.3 L1623.5 206.1 L1624.5 203.5 L1625.5 201.4 L1626.5 199.8 L1627.5 198.9 L1628.5 198.5 L1629.5 198.8 L1630.5 199.6 L1631.5 201.0 L1632.5 203.1 L1633.5 205.6 L1634.5 208.7 L1635.5 212.3 L1636.5 216.4 L1637.5 220.8 L1638.5 225.6 L1639.5 230.7 L1640.5 236.1 L1641.5 241.7 L1642.5 247.4 L1643.5 253.2 L1644.5 259.0 L1645.5 264.7 L1646.5 270.3 L1647.5 275.7 L1648.5 280.9 L1649.5 285.8 L1650.5 290.4 L1651.5 294.6 L1652.5 298.3 L1653.5 301.5 L1654.5 304.3 L1655.5 306.4 L1656.5 308.0 L1657.5 309.1 L1658.5 309.5 L1659.5 309.3 L1660.5 308.5 L1661.5 307.1 L1662.5 305.2 L1663.5 302.7 L1664.5 299.6 L1665.5 296.1 L1666.5 292.1 L1667.5 287.7 L1668.5 282.9 L1669.5 277.8 L1670.5 272.5 L1671.5 266.9 L1672.5 261.2 L1673.5 255.4 L1674.5 249.7 L1675.5 243.9 L1676.5 238.3 L1677.5 232.8 L1678.5 227.6 L1679.5 222.7 L1680.5 218.1 L1681.5 213.9 L1682.5 210.1 L1683.5 206.8 L1684.5 204.0 L1685.5 201.8 L1686.5 200.1 L1687.5 199.0 L1688.5 198.5 L1689.5 198.6 L1690.5 199.4 L1691.5 200.7 L1692.5 202.6 L1693.5 205.0 L1694.5 208.0 L1695.5 211.5 L1696.5 215.5 L1697.5 219.8 L1698.5 224.6 L1699.5 229.6 L1700.5 235.0 L1701.5 240.5 L1702.5 246.2 L1703.5 251.9 L1704.5 257.7 L1705.5 263.5 L1706.5 269.1 L1707.5 274.6 L1708.5 279.8 L1709.5 284.8 L1710.5 289.5 L1711.5 293.7 L1712.5 297.5 L1713.5 300.9 L1714.5 303.7 L1715.5 306.0 L1716.5 307.8 L1717.5 308.9 L1718.5 309.4 L1719.5 309.4 L1720.5 308.7 L1721.5 307.5 L1722.5 305.7 L1723.5 303.3 L1724.5 300.3 L1725.5 296.9 L1726.5 293.0 L1727.5 288.7 L1728.5 284.0 L1729.5 278.9 L1730.5 273.6 L1731.5 268.1 L1732.5 262.4 L1733.5 256.7 L1734.5 250.9 L1735.5 245.1 L1736.5 239.5 L1737.5 234.0 L1738.5 228.7 L1739.5 223.7 L1740.5 219.0 L1741.5 214.7 L1742.5 210.8 L1743.5 207.4 L1744.5 204.6 L1745.5 202.2 L1746.5 200.4 L1747.5 199.2 L1748.5 198.6 L1749.5 198.6 L1750.5 199.2 L1751.5 200.4 L1752.5 202.1 L1753.5 204.5 L1754.5 207.3 L1755.5 210.7 L1756.5 214.6 L1757.5 218.9 L1758.5 223.5 L1759.5 228.5 L1760.5 233.8 L1761.5 239.3 L1762.5 244.9 L1763.5 250.7 L1764.5 256.5 L1765.5 262.2 L1766.5 267.9 L1767.5 273.4 L1768.5 278.7 L1769.5 283.8 L1770.5 288.5 L1771.5 292.8 L1772.5 296.8 L1773.5 300.2 L1774.5 303.2 L1775.5 305.6 L1776.5 307.4 L1777.5 308.7 L1778.5 309.4 L1779.5 309.5 L1780.5 308.9 L1781.5 307.8 L1782.5 306.1 L1783.5 303.8 L1784.5 301.0 L1785.5 297.7 L1786.5 293.9 L1787.5 289.6 L1788.5 285.0 L1789.5 280.0 L1790.5 274.8 L1791.5 269.3 L1792.5 263.7 L1793.5 257.9 L1794.5 252.1 L1795.5 246.4 L1796.5 240.7 L1797.5 235.1 L1798.5 229.8 L1799.5 224.7 L1800.5 220.0 L1801.5 215.6 L1802.5 211.6 L1803.5 208.1 L1804.5 205.1 L1805.5 202.7 L1806.5 200.7 L1807.5 199.4 L1808.5 198.7 L1809.5 198.5 L1810.5 199.0 L1811.5 200.0 L1812.5 201.7 L1813.5 203.9 L1814.5 206.7 L1815.5 210.0 L1816.5 213.7 L1817.5 217.9 L1818.5 222.5 L1819.5 227.4 L1820.5 232.6 L1821.5 238.1 L1822.5 243.7 L1823.5 249.5 L1824.5 255.2 L1825.5 261.0 L1826.5 266.7 L1827.5 272.3 L1828.5 277.6 L1829.5 282.7 L1830.5 287.5 L1831.5 291.9 L1832.5 296.0 L1833.5 299.5 L1834.5 302.6 L1835.5 305.1 L1836.5 307.1 L1837.5 308.5 L1838.5 309.3 L1839.5 309.5 L1840.5 309.1 L1841.5 308.1 L1842.5 306.5 L1843.5 304.4 L1844.5 301.6 L1845.5 298.4 L1846.5 294.7 L1847.5 290.6 L1848.5 286.0 L1849.5 281.1 L1850.5 275.9 L1851.5 270.5 L1852.5 264.9 L1853.5 259.2 L1854.5 253.4 L1855.5 247.6 L1856.5 241.9 L1857.5 236.3 L1858.5 230.9 L1859.5 225.8 L1860.5 221.0 L1861.5 216.5 L1862.5 212.5 L1863.5 208.8 L1864.5 205.7 L1865.5 203.1 L1866.5 201.1 L1867.5 199.6 L1868.5 198.8 L1869.5 198.5 L1870.5 198.8 L1871.5 199.8 L1872.5 201.3 L1873.5 203.4 L1874.5 206.0 L1875.5 209.2 L1876.5 212.9 L1877.5 217.0 L1878.5 221.5 L1879.5 226.3 L1880.5 231.5 L1881.5 236.9 L1882.5 242.5 L1883.5 248.2 L1884.5 254.0" fill="none" stroke="#0000ff" stroke-width="1" shape-rendering="crispEdges"/>
<rect x="1041.5" y="333.5" width="843" height="111" fill="none" stroke="#b4b4b4" shape-rendering="crispEdges"/>
<line x1="1033" y1="333.5" x2="1041" y2="333.5" stroke="#b4b4b4" shape-rendering="crispEdges"/>
<text x="1032" y="339.0" font-size="15.8" fill="#b4b4b4" text-anchor="end">100mA</text>
<line x1="1033" y1="355.5" x2="1041" y2="355.5" stroke="#b4b4b4" shape-rendering="crispEdges"/>
<text x="1032" y="361.0" font-size="15.8" fill="#b4b4b4" text-anchor="end">60mA</text>
<line x1="1033" y1="377.5" x2="1041" y2="377.5" stroke="#b4b4b4" shape-rendering="crispEdges"/>
<text x="1032" y="383.0" font-size="15.8" fill="#b4b4b4" text-anchor="end">20mA</text>
<line x1="1033" y1="400.5" x2="1041" y2="400.5" stroke="#b4b4b4" shape-rendering="crispEdges"/>
<text x="1032" y="406.0" font-size="15.8" fill="#b4b4b4" text-anchor="end">-20mA</text>
<line x1="1033" y1="422.5" x2="1041" y2="422.5" stroke="#b4b4b4" shape-rendering="crispEdges"/>
<text x="1032" y="428.0" font-size="15.8" fill="#b4b4b4" text-anchor="end">-60mA</text>
<line x1="1033" y1="444.5" x2="1041" y2="444.5" stroke="#b4b4b4" shape-rendering="crispEdges"/>
<text x="1032" y="450.0" font-size="15.8" fill="#b4b4b4" text-anchor="end">-100mA</text>
<text x="1461.5" y="326.8" font-size="16.3" fill="#00ff00" text-anchor="middle">I(R2)</text>
<path d="M1041.5 389.0 L1042.5 394.8 L1043.5 400.5 L1044.5 406.1 L1045.5 411.5 L1046.5 416.7 L1047.5 421.5 L1048.5 426.0 L1049.5 430.1 L1050.5 433.8 L1051.5 437.0 L1052.5 439.6 L1053.5 441.7 L1054.5 443.2 L1055.5 444.2 L1056.5 444.5 L1057.5 444.2 L1058.5 443.4 L1059.5 441.9 L1060.5 439.9 L1061.5 437.3 L1062.5 434.2 L1063.5 430.5 L1064.5 426.5 L1065.5 422.0 L1066.5 417.2 L1067.5 412.1 L1068.5 406.7 L1069.5 401.1 L1070.5 395.4 L1071.5 389.6 L1072.5 383.8 L1073.5 378.1 L1074.5 372.5 L1075.5 367.1 L1076.5 361.9 L1077.5 357.0 L1078.5 352.4 L1079.5 348.3 L1080.5 344.6 L1081.5 341.4 L1082.5 338.6 L1083.5 336.5 L1084.5 334.9 L1085.5 333.9 L1086.5 333.5 L1087.5 333.7 L1088.5 334.5 L1089.5 335.9 L1090.5 337.9 L1091.5 340.4 L1092.5 343.5 L1093.5 347.0 L1094.5 351.1 L1095.5 355.5 L1096.5 360.3 L1097.5 365.4 L1098.5 370.7 L1099.5 376.3 L1100.5 382.0 L1101.5 387.8 L1102.5 393.5 L1103.5 399.3 L1104.5 404.9 L1105.5 410.4 L1106.5 415.6 L1107.5 420.5 L1108.5 425.1 L1109.5 429.3 L1110.5 433.0 L1111.5 436.3 L1112.5 439.1 L1113.5 441.3 L1114.5 443.0 L1115.5 444.0 L1116.5 444.5 L1117.5 444.3 L1118.5 443.6 L1119.5 442.3 L1120.5 440.3 L1121.5 437.9 L1122.5 434.9 L1123.5 431.4 L1124.5 427.4 L1125.5 423.0 L1126.5 418.3 L1127.5 413.2 L1128.5 407.9 L1129.5 402.3 L1130.5 396.6 L1131.5 390.9 L1132.5 385.1 L1133.5 379.3 L1134.5 373.7 L1135.5 368.2 L1136.5 363.0 L1137.5 358.0 L1138.5 353.4 L1139.5 349.1 L1140.5 345.3 L1141.5 342.0 L1142.5 339.2 L1143.5 336.9 L1144.5 335.2 L1145.5 334.1 L1146.5 333.5 L1147.5 333.6 L1148.5 334.3 L1149.5 335.6 L1150.5 337.4 L1151.5 339.8 L1152.5 342.8 L1153.5 346.2 L1154.5 350.2 L1155.5 354.5 L1156.5 359.2 L1157.5 364.3 L1158.5 369.6 L1159.5 375.1 L1160.5 380.8 L1161.5 386.5 L1162.5 392.3 L1163.5 398.1 L1164.5 403.7 L1165.5 409.2 L1166.5 414.5 L1167.5 419.5 L1168.5 424.1 L1169.5 428.4 L1170.5 432.3 L1171.5 435.7 L1172.5 438.5 L1173.5 440.9 L1174.5 442.6 L1175.5 443.8 L1176.5 444.4 L1177.5 444.4 L1178.5 443.8 L1179.5 442.6 L1180.5 440.8 L1181.5 438.4 L1182.5 435.6 L1183.5 432.2 L1184.5 428.3 L1185.5 424.0 L1186.5 419.3 L1187.5 414.3 L1188.5 409.0 L1189.5 403.5 L1190.5 397.9 L1191.5 392.1 L1192.5 386.3 L1193.5 380.6 L1194.5 374.9 L1195.5 369.4 L1196.5 364.1 L1197.5 359.0 L1198.5 354.3 L1199.5 350.0 L1200.5 346.1 L1201.5 342.7 L1202.5 339.7 L1203.5 337.3 L1204.5 335.5 L1205.5 334.3 L1206.5 333.6 L1207.5 333.6 L1208.5 334.1 L1209.5 335.2 L1210.5 337.0 L1211.5 339.3 L1212.5 342.1 L1213.5 345.5 L1214.5 349.3 L1215.5 353.5 L1216.5 358.2 L1217.5 363.2 L1218.5 368.4 L1219.5 373.9 L1220.5 379.5 L1221.5 385.3 L1222.5 391.1 L1223.5 396.8 L1224.5 402.5 L1225.5 408.0 L1226.5 413.4 L1227.5 418.4 L1228.5 423.2 L1229.5 427.5 L1230.5 431.5 L1231.5 435.0 L1232.5 438.0 L1233.5 440.4 L1234.5 442.3 L1235.5 443.6 L1236.5 444.4 L1237.5 444.5 L1238.5 444.0 L1239.5 442.9 L1240.5 441.2 L1241.5 439.0 L1242.5 436.2 L1243.5 432.9 L1244.5 429.1 L1245.5 424.9 L1246.5 420.3 L1247.5 415.4 L1248.5 410.2 L1249.5 404.7 L1250.5 399.1 L1251.5 393.3 L1252.5 387.6 L1253.5 381.8 L1254.5 376.1 L1255.5 370.5 L1256.5 365.2 L1257.5 360.1 L1258.5 355.3 L1259.5 350.9 L1260.5 346.9 L1261.5 343.4 L1262.5 340.3 L1263.5 337.8 L1264.5 335.9 L1265.5 334.5 L1266.5 333.7 L1267.5 333.5 L1268.5 333.9 L1269.5 335.0 L1270.5 336.6 L1271.5 338.7 L1272.5 341.5 L1273.5 344.7 L1274.5 348.4 L1275.5 352.6 L1276.5 357.2 L1277.5 362.1 L1278.5 367.3 L1279.5 372.7 L1280.5 378.3 L1281.5 384.0 L1282.5 389.8 L1283.5 395.6 L1284.5 401.3 L1285.5 406.9 L1286.5 412.3 L1287.5 417.4 L1288.5 422.2 L1289.5 426.6 L1290.5 430.7 L1291.5 434.3 L1292.5 437.4 L1293.5 439.9 L1294.5 442.0 L1295.5 443.4 L1296.5 444.2 L1297.5 444.5 L1298.5 444.1 L1299.5 443.2 L1300.5 441.6 L1301.5 439.5 L1302.5 436.9 L1303.5 433.7 L1304.5 430.0 L1305.5 425.9 L1306.5 421.4 L1307.5 416.5 L1308.5 411.3 L1309.5 405.9 L1310.5 400.3 L1311.5 394.6 L1312.5 388.8 L1313.5 383.0 L1314.5 377.3 L1315.5 371.7 L1316.5 366.3 L1317.5 361.2 L1318.5 356.3 L1319.5 351.8 L1320.5 347.7 L1321.5 344.1 L1322.5 340.9 L1323.5 338.3 L1324.5 336.2 L1325.5 334.7 L1326.5 333.8 L1327.5 333.5 L1328.5 333.8 L1329.5 334.7 L1330.5 336.2 L1331.5 338.2 L1332.5 340.8 L1333.5 344.0 L1334.5 347.6 L1335.5 351.7 L1336.5 356.1 L1337.5 361.0 L1338.5 366.1 L1339.5 371.5 L1340.5 377.1 L1341.5 382.8 L1342.5 388.6 L1343.5 394.4 L1344.5 400.1 L1345.5 405.7 L1346.5 411.1 L1347.5 416.3 L1348.5 421.2 L1349.5 425.7 L1350.5 429.9 L1351.5 433.5 L1352.5 436.8 L1353.5 439.4 L1354.5 441.6 L1355.5 443.1 L1356.5 444.1 L1357.5 444.5 L1358.5 444.3 L1359.5 443.4 L1360.5 442.0 L1361.5 440.0 L1362.5 437.5 L1363.5 434.4 L1364.5 430.8 L1365.5 426.8 L1366.5 422.4 L1367.5 417.6 L1368.5 412.4 L1369.5 407.1 L1370.5 401.5 L1371.5 395.8 L1372.5 390.0 L1373.5 384.2 L1374.5 378.5 L1375.5 372.9 L1376.5 367.5 L1377.5 362.2 L1378.5 357.3 L1379.5 352.7 L1380.5 348.6 L1381.5 344.8 L1382.5 341.6 L1383.5 338.8 L1384.5 336.6 L1385.5 335.0 L1386.5 334.0 L1387.5 333.5 L1388.5 333.7 L1389.5 334.4 L1390.5 335.8 L1391.5 337.7 L1392.5 340.2 L1393.5 343.3 L1394.5 346.8 L1395.5 350.8 L1396.5 355.2 L1397.5 359.9 L1398.5 365.0 L1399.5 370.3 L1400.5 375.9 L1401.5 381.6 L1402.5 387.3 L1403.5 393.1 L1404.5 398.9 L1405.5 404.5 L1406.5 410.0 L1407.5 415.2 L1408.5 420.2 L1409.5 424.8 L1410.5 429.0 L1411.5 432.8 L1412.5 436.1 L1413.5 438.9 L1414.5 441.2 L1415.5 442.9 L1416.5 444.0 L1417.5 444.5 L1418.5 444.4 L1419.5 443.7 L1420.5 442.4 L1421.5 440.5 L1422.5 438.1 L1423.5 435.1 L1424.5 431.6 L1425.5 427.7 L1426.5 423.3 L1427.5 418.6 L1428.5 413.6 L1429.5 408.2 L1430.5 402.7 L1431.5 397.0 L1432.5 391.3 L1433.5 385.5 L1434.5 379.7 L1435.5 374.1 L1436.5 368.6 L1437.5 363.3 L1438.5 358.3 L1439.5 353.7 L1440.5 349.4 L1441.5 345.6 L1442.5 342.2 L1443.5 339.4 L1444.5 337.1 L1445.5 335.3 L1446.5 334.1 L1447.5 333.6 L1448.5 333.6 L1449.5 334.2 L1450.5 335.5 L1451.5 337.3 L1452.5 339.6 L1453.5 342.6 L1454.5 346.0 L1455.5 349.9 L1456.5 354.2 L1457.5 358.9 L1458.5 363.9 L1459.5 369.2 L1460.5 374.7 L1461.5 380.3 L1462.5 386.1 L1463.5 391.9 L1464.5 397.7 L1465.5 403.3 L1466.5 408.8 L1467.5 414.1 L1468.5 419.1 L1469.5 423.8 L1470.5 428.1 L1471.5 432.0 L1472.5 435.4 L1473.5 438.4 L1474.5 440.7 L1475.5 442.5 L1476.5 443.8 L1477.5 444.4 L1478.5 444.4 L1479.5 443.9 L1480.5 442.7 L1481.5 440.9 L1482.5 438.6 L1483.5 435.8 L1484.5 432.4 L1485.5 428.6 L1486.5 424.3 L1487.5 419.7 L1488.5 414.7 L1489.5 409.4 L1490.5 403.9 L1491.5 398.3 L1492.5 392.5 L1493.5 386.7 L1494.5 381.0 L1495.5 375.3 L1496.5 369.8 L1497.5 364.4 L1498.5 359.4 L1499.5 354.7 L1500.5 350.3 L1501.5 346.4 L1502.5 342.9 L1503.5 339.9 L1504.5 337.5 L1505.5 335.6 L1506.5 334.3 L1507.5 333.6 L1508.5 333.5 L1509.5 334.0 L1510.5 335.1 L1511.5 336.8 L1512.5 339.1 L1513.5 341.9 L1514.5 345.2 L1515.5 349.0 L1516.5 353.2 L1517.5 357.8 L1518.5 362.8 L1519.5 368.0 L1520.5 373.5 L1521.5 379.1 L1522.5 384.9 L1523.5 390.7 L1524.5 396.4 L1525.5 402.1 L1526.5 407.7 L1527.5 413.0 L1528.5 418.1 L1529.5 422.8 L1530.5 427.2 L1531.5 431.2 L1532.5 434.7 L1533.5 437.8 L1534.5 440.3 L1535.5 442.2 L1536.5 443.6 L1537.5 444.3 L1538.5 444.5 L1539.5 444.0 L1540.5 443.0 L1541.5 441.4 L1542.5 439.2 L1543.5 436.4 L1544.5 433.2 L1545.5 429.4 L1546.5 425.3 L1547.5 420.7 L1548.5 415.8 L1549.5 410.5 L1550.5 405.1 L1551.5 399.5 L1552.5 393.8 L1553.5 388.0 L1554.5 382.2 L1555.5 376.5 L1556.5 370.9 L1557.5 365.6 L1558.5 360.4 L1559.5 355.6 L1560.5 351.2 L1561.5 347.2 L1562.5 343.6 L1563.5 340.5 L1564.5 338.0 L1565.5 336.0 L1566.5 334.6 L1567.5 333.7 L1568.5 333.5 L1569.5 333.9 L1570.5 334.9 L1571.5 336.4 L1572.5 338.6 L1573.5 341.2 L1574.5 344.5 L1575.5 348.1 L1576.5 352.3 L1577.5 356.8 L1578.5 361.7 L1579.5 366.9 L1580.5 372.3 L1581.5 377.9 L1582.5 383.6 L1583.5 389.4 L1584.5 395.2 L1585.5 400.9 L1586.5 406.5 L1587.5 411.9 L1588.5 417.0 L1589.5 421.9 L1590.5 426.3 L1591.5 430.4 L1592.5 434.0 L1593.5 437.2 L1594.5 439.8 L1595.5 441.8 L1596.5 443.3 L1597.5 444.2 L1598.5 444.5 L1599.5 444.2 L1600.5 443.3 L1601.5 441.8 L1602.5 439.7 L1603.5 437.1 L1604.5 433.9 L1605.5 430.3 L1606.5 426.2 L1607.5 421.7 L1608.5 416.8 L1609.5 411.7 L1610.5 406.3 L1611.5 400.7 L1612.5 395.0 L1613.5 389.2 L1614.5 383.4 L1615.5 377.7 L1616.5 372.1 L1617.5 366.7 L1618.5 361.5 L1619.5 356.6 L1620.5 352.1 L1621.5 348.0 L1622.5 344.3 L1623.5 341.1 L1624.5 338.5 L1625.5 336.4 L1626.5 334.8 L1627.5 333.9 L1628.5 333.5 L1629.5 333.8 L1630.5 334.6 L1631.5 336.0 L1632.5 338.1 L1633.5 340.6 L1634.5 343.7 L1635.5 347.3 L1636.5 351.4 L1637.5 355.8 L1638.5 360.6 L1639.5 365.7 L1640.5 371.1 L1641.5 376.7 L1642.5 382.4 L1643.5 388.2 L1644.5 394.0 L1645.5 399.7 L1646.5 405.3 L1647.5 410.7 L1648.5 415.9 L1649.5 420.8 L1650.5 425.4 L1651.5 429.6 L1652.5 433.3 L1653.5 436.5 L1654.5 439.3 L1655.5 441.4 L1656.5 443.0 L1657.5 444.1 L1658.5 444.5 L1659.5 444.3 L1660.5 443.5 L1661.5 442.1 L1662.5 440.2 L1663.5 437.7 L1664.5 434.6 L1665.5 431.1 L1666.5 427.1 L1667.5 422.7 L1668.5 417.9 L1669.5 412.8 L1670.5 407.5 L1671.5 401.9 L1672.5 396.2 L1673.5 390.4 L1674.5 384.7 L1675.5 378.9 L1676.5 373.3 L1677.5 367.8 L1678.5 362.6 L1679.5 357.7 L1680.5 353.1 L1681.5 348.9 L1682.5 345.1 L1683.5 341.8 L1684.5 339.0 L1685.5 336.8 L1686.5 335.1 L1687.5 334.0 L1688.5 333.5 L1689.5 333.6 L1690.5 334.4 L1691.5 335.7 L1692.5 337.6 L1693.5 340.0 L1694.5 343.0 L1695.5 346.5 L1696.5 350.5 L1697.5 354.8 L1698.5 359.6 L1699.5 364.6 L1700.5 370.0 L1701.5 375.5 L1702.5 381.2 L1703.5 386.9 L1704.5 392.7 L1705.5 398.5 L1706.5 404.1 L1707.5 409.6 L1708.5 414.8 L1709.5 419.8 L1710.5 424.5 L1711.5 428.7 L1712.5 432.5 L1713.5 435.9 L1714.5 438.7 L1715.5 441.0 L1716.5 442.8 L1717.5 443.9 L1718.5 444.4 L1719.5 444.4 L1720.5 443.7 L1721.5 442.5 L1722.5 440.7 L1723.5 438.3 L1724.5 435.3 L1725.5 431.9 L1726.5 428.0 L1727.5 423.7 L1728.5 419.0 L1729.5 413.9 L1730.5 408.6 L1731.5 403.1 L1732.5 397.4 L1733.5 391.7 L1734.5 385.9 L1735.5 380.1 L1736.5 374.5 L1737.5 369.0 L1738.5 363.7 L1739.5 358.7 L1740.5 354.0 L1741.5 349.7 L1742.5 345.8 L1743.5 342.4 L1744.5 339.6 L1745.5 337.2 L1746.5 335.4 L1747.5 334.2 L1748.5 333.6 L1749.5 333.6 L1750.5 334.2 L1751.5 335.4 L1752.5 337.1 L1753.5 339.5 L1754.5 342.3 L1755.5 345.7 L1756.5 349.6 L1757.5 353.9 L1758.5 358.5 L1759.5 363.5 L1760.5 368.8 L1761.5 374.3 L1762.5 379.9 L1763.5 385.7 L1764.5 391.5 L1765.5 397.2 L1766.5 402.9 L1767.5 408.4 L1768.5 413.7 L1769.5 418.8 L1770.5 423.5 L1771.5 427.8 L1772.5 431.8 L1773.5 435.2 L1774.5 438.2 L1775.5 440.6 L1776.5 442.4 L1777.5 443.7 L1778.5 444.4 L1779.5 444.5 L1780.5 443.9 L1781.5 442.8 L1782.5 441.1 L1783.5 438.8 L1784.5 436.0 L1785.5 432.7 L1786.5 428.9 L1787.5 424.6 L1788.5 420.0 L1789.5 415.0 L1790.5 409.8 L1791.5 404.3 L1792.5 398.7 L1793.5 392.9 L1794.5 387.1 L1795.5 381.4 L1796.5 375.7 L1797.5 370.1 L1798.5 364.8 L1799.5 359.7 L1800.5 355.0 L1801.5 350.6 L1802.5 346.6 L1803.5 343.1 L1804.5 340.1 L1805.5 337.7 L1806.5 335.7 L1807.5 334.4 L1808.5 333.7 L1809.5 333.5 L1810.5 334.0 L1811.5 335.0 L1812.5 336.7 L1813.5 338.9 L1814.5 341.7 L1815.5 345.0 L1816.5 348.7 L1817.5 352.9 L1818.5 357.5 L1819.5 362.4 L1820.5 367.6 L1821.5 373.1 L1822.5 378.7 L1823.5 384.5 L1824.5 390.2 L1825.5 396.0 L1826.5 401.7 L1827.5 407.3 L1828.5 412.6 L1829.5 417.7 L1830.5 422.5 L1831.5 426.9 L1832.5 431.0 L1833.5 434.5 L1834.5 437.6 L1835.5 440.1 L1836.5 442.1 L1837.5 443.5 L1838.5 444.3 L1839.5 444.5 L1840.5 444.1 L1841.5 443.1 L1842.5 441.5 L1843.5 439.4 L1844.5 436.6 L1845.5 433.4 L1846.5 429.7 L1847.5 425.6 L1848.5 421.0 L1849.5 416.1 L1850.5 410.9 L1851.5 405.5 L1852.5 399.9 L1853.5 394.2 L1854.5 388.4 L1855.5 382.6 L1856.5 376.9 L1857.5 371.3 L1858.5 365.9 L1859.5 360.8 L1860.5 356.0 L1861.5 351.5 L1862.5 347.5 L1863.5 343.8 L1864.5 340.7 L1865.5 338.1 L1866.5 336.1 L1867.5 334.6 L1868.5 333.8 L1869.5 333.5 L1870.5 333.8 L1871.5 334.8 L1872.5 336.3 L1873.5 338.4 L1874.5 341.0 L1875.5 344.2 L1876.5 347.9 L1877.5 352.0 L1878.5 356.5 L1879.5 361.3 L1880.5 366.5 L1881.5 371.9 L1882.5 377.5 L1883.5 383.2 L1884.5 389.0" fill="none" stroke="#0000ff" stroke-width="1" shape-rendering="crispEdges"/>
<rect x="1041.5" y="468.5" width="843" height="111" fill="none" stroke="#b4b4b4" shape-rendering="crispEdges"/>
<line x1="1033" y1="468.5" x2="1041" y2="468.5" stroke="#b4b4b4" shape-rendering="crispEdges"/>
<text x="1032" y="474.0" font-size="15.8" fill="#b4b4b4" text-anchor="end">0.018fA</text>
<line x1="1033" y1="487.5" x2="1041" y2="487.5" stroke="#b4b4b4" shape-rendering="crispEdges"/>
<text x="1032" y="493.0" font-size="15.8" fill="#b4b4b4" text-anchor="end">0.012fA</text>
<line x1="1033" y1="505.5" x2="1041" y2="505.5" stroke="#b4b4b4" shape-rendering="crispEdges"/>
<text x="1032" y="511.0" font-size="15.8" fill="#b4b4b4" text-anchor="end">0.006fA</text>
<line x1="1033" y1="524.5" x2="1041" y2="524.5" stroke="#b4b4b4" shape-rendering="crispEdges"/>
<text x="1032" y="530.0" font-size="15.8" fill="#b4b4b4" text-anchor="end">0.000fA</text>
<line x1="1033" y1="542.5" x2="1041" y2="542.5" stroke="#b4b4b4" shape-rendering="crispEdges"/>
<text x="1032" y="548.0" font-size="15.8" fill="#b4b4b4" text-anchor="end">-0.006fA</text>
<line x1="1033" y1="561.5" x2="1041" y2="561.5" stroke="#b4b4b4" shape-rendering="crispEdges"/>
<text x="1032" y="567.0" font-size="15.8" fill="#b4b4b4" text-anchor="end">-0.012fA</text>
<line x1="1033" y1="579.5" x2="1041" y2="579.5" stroke="#b4b4b4" shape-rendering="crispEdges"/>
<text x="1032" y="585.0" font-size="15.8" fill="#b4b4b4" text-anchor="end">-0.018fA</text>
<text x="1461.5" y="461.8" font-size="16.3" fill="#00ff00" text-anchor="middle">I(R1)</text>
<path d="M1041.5 524.5 L1044.5 526.5 L1046.5 526.5 L1047.5 524.5 L1048.5 537.5 L1050.5 537.5 L1051.5 524.5 L1052.5 524.5 L1053.5 544.5 L1053.5 565.5 L1054.5 551.5 L1055.5 527.5 L1056.5 524.5 L1057.5 551.5 L1058.5 551.5 L1058.5 524.5 L1059.5 537.5 L1060.5 527.5 L1060.5 537.5 L1061.5 524.5 L1064.5 517.5 L1064.5 517.5 L1065.5 524.5 L1066.5 537.5 L1069.5 530.5 L1070.5 533.5 L1071.5 524.5 L1073.5 519.5 L1075.5 517.5 L1076.5 513.5 L1076.5 519.5 L1077.5 527.5 L1078.5 533.5 L1078.5 537.5 L1079.5 517.5 L1079.5 503.5 L1080.5 507.5 L1081.5 517.5 L1082.5 514.5 L1082.5 524.5 L1083.5 524.5 L1084.5 496.5 L1085.5 496.5 L1086.5 510.5 L1087.5 510.5 L1087.5 524.5 L1092.5 524.5 L1092.5 514.5 L1093.5 510.5 L1094.5 517.5 L1094.5 530.5 L1095.5 517.5 L1096.5 503.5 L1097.5 503.5 L1097.5 514.5 L1098.5 514.5 L1098.5 524.5 L1100.5 522.5 L1102.5 523.5 L1104.5 524.5 L1105.5 526.5 L1106.5 524.5 L1107.5 528.5 L1108.5 537.5 L1108.5 524.5 L1109.5 530.5 L1111.5 537.5 L1112.5 550.5 L1113.5 550.5 L1114.5 524.5 L1123.5 524.5 L1125.5 537.5 L1126.5 537.5 L1126.5 524.5 L1127.5 530.5 L1128.5 530.5 L1129.5 527.5 L1131.5 524.5 L1135.5 524.5 L1136.5 510.5 L1137.5 503.5 L1138.5 510.5 L1139.5 517.5 L1141.5 519.5 L1141.5 524.5 L1143.5 524.5 L1143.5 510.5 L1143.5 496.5 L1144.5 503.5 L1145.5 507.5 L1145.5 524.5 L1146.5 517.5 L1146.5 524.5 L1151.5 524.5 L1153.5 508.5 L1153.5 503.5 L1154.5 510.5 L1155.5 511.5 L1156.5 524.5 L1157.5 523.5 L1158.5 519.5 L1159.5 523.5 L1163.5 524.5 L1165.5 526.5 L1167.5 524.5 L1168.5 524.5 L1169.5 533.5 L1170.5 544.5 L1170.5 550.5 L1171.5 537.5 L1172.5 537.5 L1172.5 537.5 L1173.5 547.5 L1174.5 544.5 L1174.5 550.5 L1175.5 537.5 L1175.5 524.5 L1176.5 537.5 L1177.5 530.5 L1178.5 524.5 L1184.5 524.5 L1186.5 530.5 L1187.5 537.5 L1188.5 530.5 L1190.5 526.5 L1191.5 527.5 L1193.5 522.5 L1194.5 513.5 L1196.5 516.5 L1197.5 524.5 L1202.5 524.5 L1203.5 517.5 L1204.5 503.5 L1205.5 496.5 L1206.5 496.5 L1206.5 510.5 L1207.5 511.5 L1207.5 524.5 L1212.5 524.5 L1213.5 517.5 L1214.5 524.5 L1215.5 515.5 L1216.5 510.5 L1217.5 518.5 L1217.5 524.5 L1218.5 519.5 L1220.5 523.5 L1221.5 524.5 L1225.5 524.5 L1227.5 527.5 L1228.5 530.5 L1229.5 537.5 L1230.5 533.5 L1231.5 524.5 L1239.5 524.5 L1239.5 544.5 L1240.5 550.5 L1241.5 550.5 L1242.5 537.5 L1243.5 524.5 L1244.5 530.5 L1246.5 524.5 L1248.5 524.5 L1250.5 524.5 L1250.5 524.5 L1252.5 524.5 L1254.5 522.5 L1255.5 513.5 L1256.5 510.5 L1256.5 524.5 L1257.5 524.5 L1258.5 510.5 L1259.5 508.5 L1259.5 517.5 L1260.5 503.5 L1260.5 513.5 L1261.5 510.5 L1262.5 503.5 L1263.5 496.5 L1265.5 496.5 L1265.5 510.5 L1266.5 524.5 L1266.5 510.5 L1266.5 517.5 L1267.5 503.5 L1267.5 496.5 L1268.5 510.5 L1268.5 510.5 L1269.5 524.5 L1270.5 524.5 L1271.5 517.5 L1271.5 510.5 L1272.5 517.5 L1272.5 524.5 L1274.5 524.5 L1275.5 517.5 L1275.5 510.5 L1276.5 515.5 L1277.5 517.5 L1279.5 518.5 L1280.5 524.5 L1281.5 522.5 L1284.5 524.5 L1285.5 529.5 L1287.5 533.5 L1288.5 530.5 L1288.5 524.5 L1289.5 527.5 L1290.5 530.5 L1291.5 548.5 L1292.5 565.5 L1292.5 557.5 L1293.5 544.5 L1294.5 540.5 L1294.5 530.5 L1295.5 524.5 L1295.5 537.5 L1296.5 530.5 L1296.5 524.5 L1301.5 524.5 L1302.5 537.5 L1302.5 550.5 L1303.5 537.5 L1303.5 527.5 L1304.5 521.5 L1305.5 517.5 L1306.5 524.5 L1307.5 537.5 L1307.5 529.5 L1308.5 524.5 L1310.5 526.5 L1311.5 524.5 L1314.5 523.5 L1316.5 519.5 L1318.5 517.5 L1319.5 524.5 L1319.5 515.5 L1321.5 510.5 L1322.5 510.5 L1322.5 524.5 L1323.5 510.5 L1323.5 494.5 L1324.5 483.5 L1325.5 490.5 L1326.5 491.5 L1326.5 524.5 L1327.5 513.5 L1327.5 519.5 L1328.5 510.5 L1329.5 517.5 L1330.5 524.5 L1333.5 524.5 L1335.5 529.5 L1336.5 530.5 L1336.5 520.5 L1337.5 503.5 L1337.5 515.5 L1338.5 514.5 L1338.5 522.5 L1339.5 520.5 L1340.5 523.5 L1342.5 525.5 L1342.5 524.5 L1345.5 524.5 L1346.5 530.5 L1346.5 537.5 L1347.5 530.5 L1349.5 524.5 L1351.5 524.5 L1351.5 537.5 L1352.5 544.5 L1352.5 550.5 L1353.5 540.5 L1353.5 524.5 L1354.5 543.5 L1354.5 550.5 L1355.5 540.5 L1356.5 537.5 L1357.5 529.5 L1358.5 524.5 L1358.5 537.5 L1360.5 530.5 L1361.5 524.5 L1364.5 524.5 L1365.5 530.5 L1367.5 526.5 L1368.5 524.5 L1370.5 524.5 L1372.5 526.5 L1373.5 523.5 L1375.5 519.5 L1375.5 524.5 L1377.5 524.5 L1379.5 517.5 L1381.5 517.5 L1382.5 510.5 L1384.5 510.5 L1384.5 520.5 L1385.5 524.5 L1385.5 510.5 L1386.5 511.5 L1386.5 496.5 L1387.5 510.5 L1388.5 511.5 L1388.5 524.5 L1392.5 524.5 L1393.5 510.5 L1394.5 513.5 L1394.5 503.5 L1395.5 511.5 L1395.5 524.5 L1396.5 517.5 L1397.5 510.5 L1397.5 515.5 L1398.5 524.5 L1399.5 522.5 L1400.5 517.5 L1402.5 520.5 L1403.5 524.5 L1405.5 525.5 L1406.5 524.5 L1406.5 530.5 L1407.5 526.5 L1408.5 524.5 L1409.5 524.5 L1410.5 537.5 L1415.5 537.5 L1415.5 524.5 L1421.5 524.5 L1423.5 537.5 L1424.5 544.5 L1426.5 537.5 L1426.5 524.5 L1429.5 524.5 L1431.5 528.5 L1432.5 524.5 L1434.5 519.5 L1435.5 517.5 L1436.5 521.5 L1437.5 515.5 L1437.5 510.5 L1438.5 513.5 L1439.5 515.5 L1440.5 517.5 L1441.5 510.5 L1441.5 524.5 L1442.5 517.5 L1442.5 503.5 L1443.5 503.5 L1443.5 496.5 L1444.5 510.5 L1445.5 511.5 L1445.5 524.5 L1447.5 524.5 L1448.5 517.5 L1448.5 490.5 L1449.5 489.5 L1449.5 469.5 L1450.5 483.5 L1451.5 484.5 L1451.5 524.5 L1451.5 513.5 L1452.5 510.5 L1454.5 510.5 L1454.5 517.5 L1455.5 530.5 L1455.5 537.5 L1456.5 522.5 L1457.5 518.5 L1458.5 517.5 L1459.5 522.5 L1460.5 527.5 L1460.5 524.5 L1460.5 525.5 L1462.5 521.5 L1464.5 524.5 L1466.5 526.5 L1466.5 526.5 L1468.5 524.5 L1469.5 524.5 L1470.5 527.5 L1470.5 530.5 L1471.5 526.5 L1472.5 524.5 L1472.5 544.5 L1472.5 565.5 L1473.5 544.5 L1474.5 544.5 L1474.5 524.5 L1477.5 524.5 L1478.5 530.5 L1479.5 544.5 L1479.5 550.5 L1480.5 537.5 L1480.5 530.5 L1481.5 524.5 L1482.5 530.5 L1482.5 544.5 L1483.5 550.5 L1484.5 544.5 L1484.5 537.5 L1486.5 534.5 L1488.5 529.5 L1490.5 526.5 L1492.5 524.5 L1494.5 521.5 L1496.5 519.5 L1497.5 522.5 L1498.5 524.5 L1499.5 517.5 L1500.5 510.5 L1501.5 513.5 L1501.5 513.5 L1502.5 524.5 L1503.5 513.5 L1504.5 493.5 L1504.5 487.5 L1505.5 483.5 L1506.5 483.5 L1506.5 503.5 L1507.5 504.5 L1507.5 524.5 L1508.5 520.5 L1509.5 513.5 L1510.5 510.5 L1511.5 510.5 L1511.5 524.5 L1511.5 493.5 L1512.5 487.5 L1513.5 483.5 L1514.5 483.5 L1514.5 503.5 L1515.5 504.5 L1515.5 524.5 L1517.5 524.5 L1518.5 519.5 L1518.5 517.5 L1519.5 522.5 L1520.5 524.5 L1522.5 522.5 L1524.5 524.5 L1525.5 526.5 L1526.5 527.5 L1528.5 524.5 L1529.5 524.5 L1529.5 537.5 L1530.5 544.5 L1531.5 537.5 L1532.5 530.5 L1532.5 524.5 L1536.5 524.5 L1537.5 530.5 L1537.5 537.5 L1538.5 530.5 L1539.5 524.5 L1542.5 524.5 L1543.5 530.5 L1543.5 534.5 L1544.5 554.5 L1544.5 571.5 L1545.5 547.5 L1546.5 546.5 L1546.5 524.5 L1547.5 534.5 L1547.5 537.5 L1548.5 527.5 L1549.5 524.5 L1549.5 530.5 L1550.5 528.5 L1552.5 522.5 L1554.5 522.5 L1555.5 519.5 L1557.5 518.5 L1558.5 510.5 L1559.5 517.5 L1559.5 518.5 L1560.5 524.5 L1561.5 530.5 L1562.5 530.5 L1562.5 519.5 L1563.5 510.5 L1563.5 517.5 L1564.5 515.5 L1564.5 524.5 L1565.5 504.5 L1565.5 483.5 L1566.5 504.5 L1566.5 504.5 L1567.5 524.5 L1569.5 524.5 L1569.5 513.5 L1570.5 510.5 L1571.5 510.5 L1571.5 517.5 L1572.5 524.5 L1573.5 522.5 L1573.5 513.5 L1574.5 513.5 L1575.5 503.5 L1575.5 512.5 L1576.5 510.5 L1577.5 513.5 L1577.5 503.5 L1578.5 513.5 L1578.5 524.5 L1579.5 513.5 L1580.5 517.5 L1580.5 510.5 L1581.5 518.5 L1582.5 518.5 L1582.5 524.5 L1584.5 524.5 L1585.5 524.5 L1587.5 522.5 L1588.5 526.5 L1588.5 530.5 L1589.5 520.5 L1590.5 510.5 L1590.5 517.5 L1591.5 520.5 L1592.5 524.5 L1595.5 524.5 L1596.5 537.5 L1596.5 550.5 L1597.5 543.5 L1598.5 537.5 L1599.5 524.5 L1600.5 524.5 L1601.5 537.5 L1602.5 529.5 L1604.5 524.5 L1613.5 524.5 L1614.5 521.5 L1615.5 519.5 L1615.5 523.5 L1617.5 519.5 L1618.5 515.5 L1619.5 510.5 L1619.5 520.5 L1620.5 517.5 L1621.5 513.5 L1621.5 504.5 L1622.5 496.5 L1623.5 504.5 L1624.5 504.5 L1624.5 524.5 L1625.5 518.5 L1626.5 517.5 L1627.5 510.5 L1627.5 518.5 L1628.5 520.5 L1629.5 510.5 L1630.5 510.5 L1630.5 496.5 L1633.5 496.5 L1633.5 510.5 L1633.5 511.5 L1634.5 524.5 L1635.5 522.5 L1636.5 514.5 L1636.5 510.5 L1637.5 517.5 L1638.5 522.5 L1639.5 524.5 L1640.5 521.5 L1641.5 519.5 L1642.5 523.5 L1643.5 524.5 L1645.5 524.5 L1648.5 524.5 L1648.5 529.5 L1650.5 530.5 L1650.5 537.5 L1651.5 544.5 L1651.5 537.5 L1652.5 530.5 L1653.5 524.5 L1657.5 524.5 L1658.5 530.5 L1658.5 543.5 L1659.5 550.5 L1660.5 543.5 L1660.5 530.5 L1661.5 524.5 L1661.5 537.5 L1662.5 550.5 L1663.5 530.5 L1664.5 524.5 L1664.5 530.5 L1665.5 537.5 L1666.5 529.5 L1667.5 528.5 L1668.5 524.5 L1670.5 524.5 L1670.5 524.5 L1673.5 524.5 L1675.5 520.5 L1677.5 513.5 L1678.5 510.5 L1679.5 510.5 L1680.5 520.5 L1680.5 530.5 L1681.5 519.5 L1681.5 503.5 L1682.5 517.5 L1683.5 510.5 L1683.5 522.5 L1684.5 524.5 L1684.5 513.5 L1685.5 510.5 L1687.5 510.5 L1688.5 518.5 L1688.5 524.5 L1689.5 504.5 L1689.5 483.5 L1690.5 504.5 L1690.5 504.5 L1691.5 524.5 L1694.5 524.5 L1695.5 519.5 L1696.5 517.5 L1697.5 517.5 L1698.5 523.5 L1700.5 520.5 L1701.5 521.5 L1702.5 524.5 L1703.5 522.5 L1704.5 524.5 L1706.5 528.5 L1707.5 533.5 L1707.5 524.5 L1709.5 524.5 L1711.5 529.5 L1711.5 530.5 L1713.5 525.5 L1714.5 529.5 L1715.5 537.5 L1715.5 537.5 L1716.5 530.5 L1717.5 528.5 L1717.5 524.5 L1718.5 530.5 L1718.5 537.5 L1719.5 527.5 L1720.5 524.5 L1722.5 524.5 L1723.5 530.5 L1724.5 537.5 L1725.5 535.5 L1726.5 530.5 L1727.5 533.5 L1727.5 537.5 L1728.5 529.5 L1729.5 524.5 L1730.5 528.5 L1731.5 533.5 L1732.5 529.5 L1734.5 524.5 L1736.5 520.5 L1738.5 517.5 L1739.5 515.5 L1739.5 510.5 L1740.5 515.5 L1741.5 524.5 L1741.5 530.5 L1742.5 517.5 L1743.5 523.5 L1743.5 522.5 L1744.5 515.5 L1745.5 513.5 L1746.5 500.5 L1746.5 496.5 L1746.5 483.5 L1747.5 504.5 L1747.5 504.5 L1748.5 524.5 L1754.5 524.5 L1755.5 518.5 L1757.5 517.5 L1759.5 515.5 L1759.5 513.5 L1760.5 510.5 L1761.5 515.5 L1762.5 522.5 L1763.5 524.5 L1764.5 524.5 L1767.5 524.5 L1768.5 527.5 L1768.5 530.5 L1769.5 524.5 L1771.5 524.5 L1772.5 528.5 L1773.5 530.5 L1773.5 524.5 L1775.5 524.5 L1776.5 529.5 L1777.5 532.5 L1777.5 537.5 L1778.5 530.5 L1779.5 530.5 L1779.5 537.5 L1780.5 530.5 L1781.5 524.5 L1781.5 530.5 L1782.5 528.5 L1782.5 537.5 L1783.5 527.5 L1784.5 524.5 L1785.5 528.5 L1785.5 529.5 L1786.5 524.5 L1787.5 530.5 L1788.5 527.5 L1790.5 524.5 L1796.5 524.5 L1797.5 519.5 L1798.5 513.5 L1799.5 518.5 L1800.5 524.5 L1801.5 521.5 L1802.5 515.5 L1803.5 510.5 L1804.5 504.5 L1805.5 496.5 L1805.5 502.5 L1806.5 510.5 L1807.5 517.5 L1808.5 524.5 L1810.5 524.5 L1811.5 504.5 L1811.5 483.5 L1812.5 504.5 L1813.5 504.5 L1813.5 524.5 L1814.5 517.5 L1814.5 510.5 L1815.5 515.5 L1816.5 518.5 L1816.5 524.5 L1820.5 524.5 L1821.5 522.5 L1821.5 519.5 L1822.5 523.5 L1824.5 523.5 L1825.5 524.5 L1827.5 524.5 L1831.5 524.5 L1832.5 527.5 L1833.5 530.5 L1834.5 526.5 L1834.5 524.5 L1835.5 530.5 L1836.5 537.5 L1836.5 524.5 L1838.5 524.5 L1839.5 537.5 L1840.5 555.5 L1840.5 564.5 L1841.5 554.5 L1841.5 539.5 L1842.5 534.5 L1843.5 524.5 L1847.5 524.5 L1848.5 529.5 L1849.5 533.5 L1850.5 537.5 L1851.5 529.5 L1852.5 525.5 L1853.5 523.5 L1855.5 522.5 L1856.5 526.5 L1857.5 524.5 L1858.5 517.5 L1859.5 510.5 L1859.5 515.5 L1860.5 517.5 L1860.5 524.5 L1861.5 517.5 L1862.5 517.5 L1863.5 521.5 L1864.5 524.5 L1864.5 518.5 L1865.5 513.5 L1866.5 496.5 L1866.5 493.5 L1867.5 483.5 L1867.5 504.5 L1868.5 504.5 L1868.5 524.5 L1869.5 510.5 L1871.5 510.5 L1871.5 518.5 L1872.5 524.5 L1874.5 524.5 L1876.5 526.5 L1876.5 530.5 L1877.5 524.5 L1878.5 515.5 L1878.5 510.5 L1879.5 520.5 L1880.5 524.5 L1880.5 519.5 L1881.5 517.5 L1882.5 522.5 L1883.5 524.5 L1884.5 522.5" fill="none" stroke="#0000ff" stroke-width="1" shape-rendering="crispEdges"/>
<rect x="1041.5" y="603.5" width="843" height="112" fill="none" stroke="#b4b4b4" shape-rendering="crispEdges"/>
<line x1="1033" y1="603.5" x2="1041" y2="603.5" stroke="#b4b4b4" shape-rendering="crispEdges"/>
<text x="1032" y="609.0" font-size="15.8" fill="#b4b4b4" text-anchor="end">100mA</text>
<line x1="1033" y1="625.5" x2="1041" y2="625.5" stroke="#b4b4b4" shape-rendering="crispEdges"/>
<text x="1032" y="631.0" font-size="15.8" fill="#b4b4b4" text-anchor="end">60mA</text>
<line x1="1033" y1="648.5" x2="1041" y2="648.5" stroke="#b4b4b4" shape-rendering="crispEdges"/>
<text x="1032" y="654.0" font-size="15.8" fill="#b4b4b4" text-anchor="end">20mA</text>
<line x1="1033" y1="670.5" x2="1041" y2="670.5" stroke="#b4b4b4" shape-rendering="crispEdges"/>
<text x="1032" y="676.0" font-size="15.8" fill="#b4b4b4" text-anchor="end">-20mA</text>
<line x1="1033" y1="693.5" x2="1041" y2="693.5" stroke="#b4b4b4" shape-rendering="crispEdges"/>
<text x="1032" y="699.0" font-size="15.8" fill="#b4b4b4" text-anchor="end">-60mA</text>
<line x1="1033" y1="715.5" x2="1041" y2="715.5" stroke="#b4b4b4" shape-rendering="crispEdges"/>
<text x="1032" y="721.0" font-size="15.8" fill="#b4b4b4" text-anchor="end">-100mA</text>
<text x="1461.5" y="596.8" font-size="16.3" fill="#00ff00" text-anchor="middle">I(V2)</text>
<path d="M1041.5 659.5 L1042.5 665.3 L1043.5 671.1 L1044.5 676.7 L1045.5 682.2 L1046.5 687.4 L1047.5 692.3 L1048.5 696.9 L1049.5 701.0 L1050.5 704.7 L1051.5 707.9 L1052.5 710.6 L1053.5 712.7 L1054.5 714.2 L1055.5 715.2 L1056.5 715.5 L1057.5 715.2 L1058.5 714.3 L1059.5 712.9 L1060.5 710.8 L1061.5 708.2 L1062.5 705.1 L1063.5 701.4 L1064.5 697.3 L1065.5 692.8 L1066.5 688.0 L1067.5 682.8 L1068.5 677.3 L1069.5 671.7 L1070.5 666.0 L1071.5 660.1 L1072.5 654.3 L1073.5 648.5 L1074.5 642.9 L1075.5 637.4 L1076.5 632.1 L1077.5 627.2 L1078.5 622.6 L1079.5 618.4 L1080.5 614.7 L1081.5 611.4 L1082.5 608.7 L1083.5 606.5 L1084.5 604.9 L1085.5 603.9 L1086.5 603.5 L1087.5 603.7 L1088.5 604.5 L1089.5 605.9 L1090.5 607.9 L1091.5 610.5 L1092.5 613.6 L1093.5 617.2 L1094.5 621.2 L1095.5 625.7 L1096.5 630.5 L1097.5 635.7 L1098.5 641.1 L1099.5 646.7 L1100.5 652.4 L1101.5 658.2 L1102.5 664.1 L1103.5 669.9 L1104.5 675.5 L1105.5 681.1 L1106.5 686.3 L1107.5 691.3 L1108.5 695.9 L1109.5 700.2 L1110.5 703.9 L1111.5 707.3 L1112.5 710.0 L1113.5 712.3 L1114.5 713.9 L1115.5 715.0 L1116.5 715.5 L1117.5 715.3 L1118.5 714.6 L1119.5 713.2 L1120.5 711.3 L1121.5 708.8 L1122.5 705.8 L1123.5 702.2 L1124.5 698.2 L1125.5 693.8 L1126.5 689.0 L1127.5 683.9 L1128.5 678.5 L1129.5 672.9 L1130.5 667.2 L1131.5 661.4 L1132.5 655.5 L1133.5 649.7 L1134.5 644.1 L1135.5 638.5 L1136.5 633.2 L1137.5 628.2 L1138.5 623.6 L1139.5 619.3 L1140.5 615.4 L1141.5 612.1 L1142.5 609.2 L1143.5 606.9 L1144.5 605.2 L1145.5 604.1 L1146.5 603.5 L1147.5 603.6 L1148.5 604.3 L1149.5 605.6 L1150.5 607.5 L1151.5 609.9 L1152.5 612.9 L1153.5 616.4 L1154.5 620.3 L1155.5 624.7 L1156.5 629.4 L1157.5 634.5 L1158.5 639.9 L1159.5 645.5 L1160.5 651.2 L1161.5 657.0 L1162.5 662.8 L1163.5 668.6 L1164.5 674.3 L1165.5 679.9 L1166.5 685.2 L1167.5 690.3 L1168.5 695.0 L1169.5 699.3 L1170.5 703.2 L1171.5 706.6 L1172.5 709.5 L1173.5 711.8 L1174.5 713.6 L1175.5 714.8 L1176.5 715.4 L1177.5 715.4 L1178.5 714.8 L1179.5 713.6 L1180.5 711.8 L1181.5 709.4 L1182.5 706.5 L1183.5 703.0 L1184.5 699.1 L1185.5 694.8 L1186.5 690.1 L1187.5 685.0 L1188.5 679.7 L1189.5 674.1 L1190.5 668.4 L1191.5 662.6 L1192.5 656.8 L1193.5 651.0 L1194.5 645.3 L1195.5 639.7 L1196.5 634.3 L1197.5 629.3 L1198.5 624.5 L1199.5 620.2 L1200.5 616.2 L1201.5 612.8 L1202.5 609.8 L1203.5 607.4 L1204.5 605.5 L1205.5 604.3 L1206.5 603.6 L1207.5 603.6 L1208.5 604.1 L1209.5 605.3 L1210.5 607.0 L1211.5 609.3 L1212.5 612.2 L1213.5 615.6 L1214.5 619.4 L1215.5 623.7 L1216.5 628.4 L1217.5 633.4 L1218.5 638.7 L1219.5 644.3 L1220.5 649.9 L1221.5 655.7 L1222.5 661.6 L1223.5 667.4 L1224.5 673.1 L1225.5 678.7 L1226.5 684.1 L1227.5 689.2 L1228.5 694.0 L1229.5 698.4 L1230.5 702.4 L1231.5 705.9 L1232.5 708.9 L1233.5 711.4 L1234.5 713.3 L1235.5 714.6 L1236.5 715.4 L1237.5 715.5 L1238.5 715.0 L1239.5 713.9 L1240.5 712.2 L1241.5 709.9 L1242.5 707.1 L1243.5 703.8 L1244.5 700.0 L1245.5 695.8 L1246.5 691.1 L1247.5 686.1 L1248.5 680.9 L1249.5 675.3 L1250.5 669.7 L1251.5 663.9 L1252.5 658.0 L1253.5 652.2 L1254.5 646.5 L1255.5 640.9 L1256.5 635.5 L1257.5 630.3 L1258.5 625.5 L1259.5 621.1 L1260.5 617.0 L1261.5 613.5 L1262.5 610.4 L1263.5 607.9 L1264.5 605.9 L1265.5 604.5 L1266.5 603.7 L1267.5 603.5 L1268.5 603.9 L1269.5 605.0 L1270.5 606.6 L1271.5 608.8 L1272.5 611.5 L1273.5 614.8 L1274.5 618.6 L1275.5 622.8 L1276.5 627.4 L1277.5 632.3 L1278.5 637.6 L1279.5 643.1 L1280.5 648.7 L1281.5 654.5 L1282.5 660.3 L1283.5 666.2 L1284.5 671.9 L1285.5 677.5 L1286.5 683.0 L1287.5 688.1 L1288.5 693.0 L1289.5 697.5 L1290.5 701.6 L1291.5 705.2 L1292.5 708.3 L1293.5 710.9 L1294.5 712.9 L1295.5 714.4 L1296.5 715.2 L1297.5 715.5 L1298.5 715.1 L1299.5 714.2 L1300.5 712.6 L1301.5 710.5 L1302.5 707.8 L1303.5 704.6 L1304.5 700.9 L1305.5 696.7 L1306.5 692.1 L1307.5 687.2 L1308.5 682.0 L1309.5 676.5 L1310.5 670.9 L1311.5 665.1 L1312.5 659.3 L1313.5 653.5 L1314.5 647.7 L1315.5 642.1 L1316.5 636.6 L1317.5 631.4 L1318.5 626.5 L1319.5 622.0 L1320.5 617.9 L1321.5 614.2 L1322.5 611.0 L1323.5 608.3 L1324.5 606.3 L1325.5 604.7 L1326.5 603.8 L1327.5 603.5 L1328.5 603.8 L1329.5 604.7 L1330.5 606.2 L1331.5 608.3 L1332.5 610.9 L1333.5 614.1 L1334.5 617.7 L1335.5 621.8 L1336.5 626.3 L1337.5 631.2 L1338.5 636.4 L1339.5 641.9 L1340.5 647.5 L1341.5 653.3 L1342.5 659.1 L1343.5 664.9 L1344.5 670.7 L1345.5 676.3 L1346.5 681.8 L1347.5 687.0 L1348.5 692.0 L1349.5 696.6 L1350.5 700.7 L1351.5 704.4 L1352.5 707.7 L1353.5 710.4 L1354.5 712.5 L1355.5 714.1 L1356.5 715.1 L1357.5 715.5 L1358.5 715.3 L1359.5 714.4 L1360.5 713.0 L1361.5 711.0 L1362.5 708.4 L1363.5 705.3 L1364.5 701.7 L1365.5 697.6 L1366.5 693.2 L1367.5 688.3 L1368.5 683.2 L1369.5 677.7 L1370.5 672.1 L1371.5 666.4 L1372.5 660.5 L1373.5 654.7 L1374.5 648.9 L1375.5 643.3 L1376.5 637.8 L1377.5 632.5 L1378.5 627.5 L1379.5 622.9 L1380.5 618.7 L1381.5 614.9 L1382.5 611.6 L1383.5 608.9 L1384.5 606.7 L1385.5 605.0 L1386.5 604.0 L1387.5 603.5 L1388.5 603.7 L1389.5 604.5 L1390.5 605.8 L1391.5 607.8 L1392.5 610.3 L1393.5 613.3 L1394.5 616.9 L1395.5 620.9 L1396.5 625.3 L1397.5 630.2 L1398.5 635.3 L1399.5 640.7 L1400.5 646.3 L1401.5 652.0 L1402.5 657.8 L1403.5 663.7 L1404.5 669.5 L1405.5 675.1 L1406.5 680.7 L1407.5 685.9 L1408.5 690.9 L1409.5 695.6 L1410.5 699.9 L1411.5 703.7 L1412.5 707.0 L1413.5 709.9 L1414.5 712.1 L1415.5 713.8 L1416.5 715.0 L1417.5 715.5 L1418.5 715.4 L1419.5 714.7 L1420.5 713.4 L1421.5 711.5 L1422.5 709.0 L1423.5 706.0 L1424.5 702.5 L1425.5 698.5 L1426.5 694.1 L1427.5 689.4 L1428.5 684.3 L1429.5 678.9 L1430.5 673.3 L1431.5 667.6 L1432.5 661.8 L1433.5 656.0 L1434.5 650.2 L1435.5 644.5 L1436.5 638.9 L1437.5 633.6 L1438.5 628.6 L1439.5 623.9 L1440.5 619.6 L1441.5 615.7 L1442.5 612.3 L1443.5 609.4 L1444.5 607.1 L1445.5 605.3 L1446.5 604.1 L1447.5 603.6 L1448.5 603.6 L1449.5 604.2 L1450.5 605.5 L1451.5 607.3 L1452.5 609.7 L1453.5 612.6 L1454.5 616.1 L1455.5 620.0 L1456.5 624.4 L1457.5 629.1 L1458.5 634.2 L1459.5 639.5 L1460.5 645.1 L1461.5 650.8 L1462.5 656.6 L1463.5 662.4 L1464.5 668.2 L1465.5 673.9 L1466.5 679.5 L1467.5 684.8 L1468.5 689.9 L1469.5 694.6 L1470.5 699.0 L1471.5 702.9 L1472.5 706.4 L1473.5 709.3 L1474.5 711.7 L1475.5 713.5 L1476.5 714.8 L1477.5 715.4 L1478.5 715.4 L1479.5 714.9 L1480.5 713.7 L1481.5 711.9 L1482.5 709.6 L1483.5 706.7 L1484.5 703.3 L1485.5 699.4 L1486.5 695.1 L1487.5 690.4 L1488.5 685.4 L1489.5 680.1 L1490.5 674.5 L1491.5 668.8 L1492.5 663.0 L1493.5 657.2 L1494.5 651.4 L1495.5 645.7 L1496.5 640.1 L1497.5 634.7 L1498.5 629.6 L1499.5 624.9 L1500.5 620.5 L1501.5 616.5 L1502.5 613.0 L1503.5 610.0 L1504.5 607.5 L1505.5 605.6 L1506.5 604.3 L1507.5 603.6 L1508.5 603.5 L1509.5 604.0 L1510.5 605.2 L1511.5 606.9 L1512.5 609.1 L1513.5 612.0 L1514.5 615.3 L1515.5 619.1 L1516.5 623.4 L1517.5 628.1 L1518.5 633.1 L1519.5 638.3 L1520.5 643.9 L1521.5 649.5 L1522.5 655.3 L1523.5 661.2 L1524.5 667.0 L1525.5 672.7 L1526.5 678.3 L1527.5 683.7 L1528.5 688.8 L1529.5 693.7 L1530.5 698.1 L1531.5 702.1 L1532.5 705.7 L1533.5 708.7 L1534.5 711.2 L1535.5 713.2 L1536.5 714.5 L1537.5 715.3 L1538.5 715.5 L1539.5 715.0 L1540.5 714.0 L1541.5 712.3 L1542.5 710.1 L1543.5 707.4 L1544.5 704.1 L1545.5 700.3 L1546.5 696.1 L1547.5 691.5 L1548.5 686.5 L1549.5 681.2 L1550.5 675.7 L1551.5 670.1 L1552.5 664.3 L1553.5 658.5 L1554.5 652.6 L1555.5 646.9 L1556.5 641.3 L1557.5 635.8 L1558.5 630.7 L1559.5 625.8 L1560.5 621.4 L1561.5 617.3 L1562.5 613.7 L1563.5 610.6 L1564.5 608.0 L1565.5 606.0 L1566.5 604.6 L1567.5 603.7 L1568.5 603.5 L1569.5 603.9 L1570.5 604.9 L1571.5 606.5 L1572.5 608.6 L1573.5 611.3 L1574.5 614.6 L1575.5 618.3 L1576.5 622.4 L1577.5 627.0 L1578.5 632.0 L1579.5 637.2 L1580.5 642.7 L1581.5 648.3 L1582.5 654.1 L1583.5 659.9 L1584.5 665.7 L1585.5 671.5 L1586.5 677.1 L1587.5 682.6 L1588.5 687.8 L1589.5 692.7 L1590.5 697.2 L1591.5 701.3 L1592.5 704.9 L1593.5 708.1 L1594.5 710.7 L1595.5 712.8 L1596.5 714.3 L1597.5 715.2 L1598.5 715.5 L1599.5 715.2 L1600.5 714.3 L1601.5 712.7 L1602.5 710.7 L1603.5 708.0 L1604.5 704.8 L1605.5 701.1 L1606.5 697.0 L1607.5 692.5 L1608.5 687.6 L1609.5 682.4 L1610.5 676.9 L1611.5 671.3 L1612.5 665.5 L1613.5 659.7 L1614.5 653.9 L1615.5 648.1 L1616.5 642.5 L1617.5 637.0 L1618.5 631.8 L1619.5 626.9 L1620.5 622.3 L1621.5 618.1 L1622.5 614.4 L1623.5 611.2 L1624.5 608.5 L1625.5 606.4 L1626.5 604.8 L1627.5 603.9 L1628.5 603.5 L1629.5 603.8 L1630.5 604.6 L1631.5 606.1 L1632.5 608.1 L1633.5 610.7 L1634.5 613.8 L1635.5 617.4 L1636.5 621.5 L1637.5 626.0 L1638.5 630.9 L1639.5 636.0 L1640.5 641.5 L1641.5 647.1 L1642.5 652.8 L1643.5 658.7 L1644.5 664.5 L1645.5 670.3 L1646.5 675.9 L1647.5 681.4 L1648.5 686.7 L1649.5 691.6 L1650.5 696.2 L1651.5 700.4 L1652.5 704.2 L1653.5 707.5 L1654.5 710.2 L1655.5 712.4 L1656.5 714.0 L1657.5 715.1 L1658.5 715.5 L1659.5 715.3 L1660.5 714.5 L1661.5 713.1 L1662.5 711.1 L1663.5 708.6 L1664.5 705.5 L1665.5 702.0 L1666.5 697.9 L1667.5 693.5 L1668.5 688.7 L1669.5 683.5 L1670.5 678.1 L1671.5 672.5 L1672.5 666.8 L1673.5 661.0 L1674.5 655.1 L1675.5 649.3 L1676.5 643.7 L1677.5 638.1 L1678.5 632.9 L1679.5 627.9 L1680.5 623.2 L1681.5 619.0 L1682.5 615.2 L1683.5 611.9 L1684.5 609.1 L1685.5 606.8 L1686.5 605.1 L1687.5 604.0 L1688.5 603.5 L1689.5 603.6 L1690.5 604.4 L1691.5 605.7 L1692.5 607.6 L1693.5 610.1 L1694.5 613.1 L1695.5 616.6 L1696.5 620.6 L1697.5 625.0 L1698.5 629.8 L1699.5 634.9 L1700.5 640.3 L1701.5 645.9 L1702.5 651.6 L1703.5 657.4 L1704.5 663.3 L1705.5 669.1 L1706.5 674.7 L1707.5 680.3 L1708.5 685.6 L1709.5 690.6 L1710.5 695.3 L1711.5 699.6 L1712.5 703.4 L1713.5 706.8 L1714.5 709.7 L1715.5 712.0 L1716.5 713.7 L1717.5 714.9 L1718.5 715.4 L1719.5 715.4 L1720.5 714.7 L1721.5 713.5 L1722.5 711.6 L1723.5 709.2 L1724.5 706.2 L1725.5 702.8 L1726.5 698.8 L1727.5 694.5 L1728.5 689.7 L1729.5 684.7 L1730.5 679.3 L1731.5 673.7 L1732.5 668.0 L1733.5 662.2 L1734.5 656.4 L1735.5 650.6 L1736.5 644.9 L1737.5 639.3 L1738.5 634.0 L1739.5 628.9 L1740.5 624.2 L1741.5 619.9 L1742.5 616.0 L1743.5 612.5 L1744.5 609.6 L1745.5 607.2 L1746.5 605.4 L1747.5 604.2 L1748.5 603.6 L1749.5 603.6 L1750.5 604.2 L1751.5 605.4 L1752.5 607.2 L1753.5 609.5 L1754.5 612.4 L1755.5 615.8 L1756.5 619.7 L1757.5 624.0 L1758.5 628.7 L1759.5 633.8 L1760.5 639.1 L1761.5 644.7 L1762.5 650.4 L1763.5 656.2 L1764.5 662.0 L1765.5 667.8 L1766.5 673.5 L1767.5 679.1 L1768.5 684.5 L1769.5 689.6 L1770.5 694.3 L1771.5 698.7 L1772.5 702.6 L1773.5 706.1 L1774.5 709.1 L1775.5 711.5 L1776.5 713.4 L1777.5 714.7 L1778.5 715.4 L1779.5 715.5 L1780.5 714.9 L1781.5 713.8 L1782.5 712.1 L1783.5 709.8 L1784.5 706.9 L1785.5 703.6 L1786.5 699.7 L1787.5 695.4 L1788.5 690.8 L1789.5 685.8 L1790.5 680.5 L1791.5 674.9 L1792.5 669.3 L1793.5 663.5 L1794.5 657.6 L1795.5 651.8 L1796.5 646.1 L1797.5 640.5 L1798.5 635.1 L1799.5 630.0 L1800.5 625.2 L1801.5 620.8 L1802.5 616.8 L1803.5 613.2 L1804.5 610.2 L1805.5 607.7 L1806.5 605.8 L1807.5 604.4 L1808.5 603.7 L1809.5 603.5 L1810.5 604.0 L1811.5 605.1 L1812.5 606.7 L1813.5 609.0 L1814.5 611.7 L1815.5 615.1 L1816.5 618.8 L1817.5 623.1 L1818.5 627.7 L1819.5 632.7 L1820.5 637.9 L1821.5 643.5 L1822.5 649.1 L1823.5 654.9 L1824.5 660.8 L1825.5 666.6 L1826.5 672.3 L1827.5 677.9 L1828.5 683.3 L1829.5 688.5 L1830.5 693.3 L1831.5 697.8 L1832.5 701.8 L1833.5 705.4 L1834.5 708.5 L1835.5 711.1 L1836.5 713.1 L1837.5 714.5 L1838.5 715.3 L1839.5 715.5 L1840.5 715.1 L1841.5 714.1 L1842.5 712.5 L1843.5 710.3 L1844.5 707.6 L1845.5 704.3 L1846.5 700.6 L1847.5 696.4 L1848.5 691.8 L1849.5 686.9 L1850.5 681.6 L1851.5 676.1 L1852.5 670.5 L1853.5 664.7 L1854.5 658.9 L1855.5 653.0 L1856.5 647.3 L1857.5 641.7 L1858.5 636.2 L1859.5 631.0 L1860.5 626.2 L1861.5 621.7 L1862.5 617.6 L1863.5 613.9 L1864.5 610.8 L1865.5 608.2 L1866.5 606.1 L1867.5 604.7 L1868.5 603.8 L1869.5 603.5 L1870.5 603.8 L1871.5 604.8 L1872.5 606.3 L1873.5 608.4 L1874.5 611.1 L1875.5 614.3 L1876.5 618.0 L1877.5 622.1 L1878.5 626.7 L1879.5 631.6 L1880.5 636.8 L1881.5 642.3 L1882.5 647.9 L1883.5 653.7 L1884.5 659.5" fill="none" stroke="#0000ff" stroke-width="1" shape-rendering="crispEdges"/>
<rect x="1041.5" y="739.5" width="843" height="115" fill="none" stroke="#b4b4b4" shape-rendering="crispEdges"/>
<line x1="1033" y1="739.5" x2="1041" y2="739.5" stroke="#b4b4b4" shape-rendering="crispEdges"/>
<text x="1032" y="745.0" font-size="15.8" fill="#b4b4b4" text-anchor="end">100mA</text>
<line x1="1033" y1="762.5" x2="1041" y2="762.5" stroke="#b4b4b4" shape-rendering="crispEdges"/>
<text x="1032" y="768.0" font-size="15.8" fill="#b4b4b4" text-anchor="end">60mA</text>
<line x1="1033" y1="785.5" x2="1041" y2="785.5" stroke="#b4b4b4" shape-rendering="crispEdges"/>
<text x="1032" y="791.0" font-size="15.8" fill="#b4b4b4" text-anchor="end">20mA</text>
<line x1="1033" y1="808.5" x2="1041" y2="808.5" stroke="#b4b4b4" shape-rendering="crispEdges"/>
<text x="1032" y="814.0" font-size="15.8" fill="#b4b4b4" text-anchor="end">-20mA</text>
<line x1="1033" y1="831.5" x2="1041" y2="831.5" stroke="#b4b4b4" shape-rendering="crispEdges"/>
<text x="1032" y="837.0" font-size="15.8" fill="#b4b4b4" text-anchor="end">-60mA</text>
<line x1="1033" y1="854.5" x2="1041" y2="854.5" stroke="#b4b4b4" shape-rendering="crispEdges"/>
<text x="1032" y="860.0" font-size="15.8" fill="#b4b4b4" text-anchor="end">-100mA</text>
<text x="1461.5" y="732.8" font-size="16.3" fill="#00ff00" text-anchor="middle">I(I1)</text>
<path d="M1041.5 797.0 L1042.5 791.0 L1043.5 785.1 L1044.5 779.3 L1045.5 773.7 L1046.5 768.3 L1047.5 763.3 L1048.5 758.6 L1049.5 754.4 L1050.5 750.6 L1051.5 747.3 L1052.5 744.6 L1053.5 742.4 L1054.5 740.8 L1055.5 739.8 L1056.5 739.5 L1057.5 739.8 L1058.5 740.7 L1059.5 742.2 L1060.5 744.3 L1061.5 747.0 L1062.5 750.2 L1063.5 754.0 L1064.5 758.2 L1065.5 762.8 L1066.5 767.8 L1067.5 773.1 L1068.5 778.7 L1069.5 784.5 L1070.5 790.4 L1071.5 796.4 L1072.5 802.3 L1073.5 808.3 L1074.5 814.1 L1075.5 819.7 L1076.5 825.1 L1077.5 830.2 L1078.5 834.9 L1079.5 839.2 L1080.5 843.0 L1081.5 846.4 L1082.5 849.2 L1083.5 851.4 L1084.5 853.0 L1085.5 854.1 L1086.5 854.5 L1087.5 854.3 L1088.5 853.4 L1089.5 852.0 L1090.5 849.9 L1091.5 847.3 L1092.5 844.2 L1093.5 840.5 L1094.5 836.3 L1095.5 831.7 L1096.5 826.8 L1097.5 821.5 L1098.5 815.9 L1099.5 810.2 L1100.5 804.3 L1101.5 798.3 L1102.5 792.3 L1103.5 786.3 L1104.5 780.5 L1105.5 774.9 L1106.5 769.5 L1107.5 764.4 L1108.5 759.6 L1109.5 755.3 L1110.5 751.4 L1111.5 748.0 L1112.5 745.1 L1113.5 742.8 L1114.5 741.1 L1115.5 740.0 L1116.5 739.5 L1117.5 739.7 L1118.5 740.4 L1119.5 741.8 L1120.5 743.8 L1121.5 746.4 L1122.5 749.5 L1123.5 753.1 L1124.5 757.2 L1125.5 761.8 L1126.5 766.7 L1127.5 771.9 L1128.5 777.5 L1129.5 783.2 L1130.5 789.1 L1131.5 795.1 L1132.5 801.1 L1133.5 807.0 L1134.5 812.9 L1135.5 818.5 L1136.5 824.0 L1137.5 829.1 L1138.5 833.9 L1139.5 838.3 L1140.5 842.2 L1141.5 845.7 L1142.5 848.6 L1143.5 851.0 L1144.5 852.7 L1145.5 853.9 L1146.5 854.5 L1147.5 854.4 L1148.5 853.7 L1149.5 852.4 L1150.5 850.4 L1151.5 847.9 L1152.5 844.9 L1153.5 841.3 L1154.5 837.2 L1155.5 832.7 L1156.5 827.9 L1157.5 822.6 L1158.5 817.1 L1159.5 811.4 L1160.5 805.5 L1161.5 799.6 L1162.5 793.6 L1163.5 787.6 L1164.5 781.8 L1165.5 776.1 L1166.5 770.6 L1167.5 765.4 L1168.5 760.6 L1169.5 756.2 L1170.5 752.2 L1171.5 748.7 L1172.5 745.7 L1173.5 743.3 L1174.5 741.4 L1175.5 740.2 L1176.5 739.6 L1177.5 739.6 L1178.5 740.2 L1179.5 741.5 L1180.5 743.3 L1181.5 745.8 L1182.5 748.8 L1183.5 752.3 L1184.5 756.3 L1185.5 760.8 L1186.5 765.6 L1187.5 770.8 L1188.5 776.3 L1189.5 782.0 L1190.5 787.8 L1191.5 793.8 L1192.5 799.8 L1193.5 805.8 L1194.5 811.6 L1195.5 817.3 L1196.5 822.8 L1197.5 828.0 L1198.5 832.9 L1199.5 837.4 L1200.5 841.4 L1201.5 845.0 L1202.5 848.0 L1203.5 850.5 L1204.5 852.4 L1205.5 853.7 L1206.5 854.4 L1207.5 854.4 L1208.5 853.9 L1209.5 852.7 L1210.5 850.9 L1211.5 848.5 L1212.5 845.6 L1213.5 842.1 L1214.5 838.1 L1215.5 833.7 L1216.5 828.9 L1217.5 823.8 L1218.5 818.3 L1219.5 812.7 L1220.5 806.8 L1221.5 800.9 L1222.5 794.9 L1223.5 788.9 L1224.5 783.0 L1225.5 777.3 L1226.5 771.7 L1227.5 766.5 L1228.5 761.6 L1229.5 757.1 L1230.5 753.0 L1231.5 749.4 L1232.5 746.3 L1233.5 743.7 L1234.5 741.8 L1235.5 740.4 L1236.5 739.7 L1237.5 739.5 L1238.5 740.0 L1239.5 741.2 L1240.5 742.9 L1241.5 745.2 L1242.5 748.1 L1243.5 751.5 L1244.5 755.4 L1245.5 759.8 L1246.5 764.5 L1247.5 769.7 L1248.5 775.1 L1249.5 780.7 L1250.5 786.6 L1251.5 792.5 L1252.5 798.5 L1253.5 804.5 L1254.5 810.4 L1255.5 816.1 L1256.5 821.7 L1257.5 826.9 L1258.5 831.9 L1259.5 836.5 L1260.5 840.6 L1261.5 844.3 L1262.5 847.4 L1263.5 850.0 L1264.5 852.1 L1265.5 853.5 L1266.5 854.3 L1267.5 854.5 L1268.5 854.1 L1269.5 853.0 L1270.5 851.3 L1271.5 849.1 L1272.5 846.3 L1273.5 842.9 L1274.5 839.0 L1275.5 834.7 L1276.5 830.0 L1277.5 824.9 L1278.5 819.5 L1279.5 813.9 L1280.5 808.1 L1281.5 802.1 L1282.5 796.1 L1283.5 790.2 L1284.5 784.2 L1285.5 778.5 L1286.5 772.9 L1287.5 767.6 L1288.5 762.6 L1289.5 758.0 L1290.5 753.8 L1291.5 750.1 L1292.5 746.9 L1293.5 744.2 L1294.5 742.1 L1295.5 740.6 L1296.5 739.8 L1297.5 739.5 L1298.5 739.9 L1299.5 740.9 L1300.5 742.5 L1301.5 744.7 L1302.5 747.4 L1303.5 750.7 L1304.5 754.5 L1305.5 758.8 L1306.5 763.5 L1307.5 768.5 L1308.5 773.9 L1309.5 779.5 L1310.5 785.3 L1311.5 791.2 L1312.5 797.2 L1313.5 803.2 L1314.5 809.1 L1315.5 814.9 L1316.5 820.5 L1317.5 825.8 L1318.5 830.9 L1319.5 835.5 L1320.5 839.8 L1321.5 843.5 L1322.5 846.8 L1323.5 849.5 L1324.5 851.7 L1325.5 853.2 L1326.5 854.2 L1327.5 854.5 L1328.5 854.2 L1329.5 853.3 L1330.5 851.7 L1331.5 849.6 L1332.5 846.9 L1333.5 843.7 L1334.5 839.9 L1335.5 835.7 L1336.5 831.0 L1337.5 826.0 L1338.5 820.7 L1339.5 815.1 L1340.5 809.3 L1341.5 803.4 L1342.5 797.4 L1343.5 791.4 L1344.5 785.5 L1345.5 779.7 L1346.5 774.1 L1347.5 768.7 L1348.5 763.7 L1349.5 759.0 L1350.5 754.7 L1351.5 750.8 L1352.5 747.5 L1353.5 744.7 L1354.5 742.5 L1355.5 740.9 L1356.5 739.9 L1357.5 739.5 L1358.5 739.7 L1359.5 740.6 L1360.5 742.1 L1361.5 744.1 L1362.5 746.8 L1363.5 750.0 L1364.5 753.7 L1365.5 757.8 L1366.5 762.4 L1367.5 767.4 L1368.5 772.7 L1369.5 778.3 L1370.5 784.0 L1371.5 789.9 L1372.5 795.9 L1373.5 801.9 L1374.5 807.9 L1375.5 813.7 L1376.5 819.3 L1377.5 824.7 L1378.5 829.8 L1379.5 834.6 L1380.5 838.9 L1381.5 842.8 L1382.5 846.1 L1383.5 849.0 L1384.5 851.3 L1385.5 852.9 L1386.5 854.0 L1387.5 854.5 L1388.5 854.3 L1389.5 853.5 L1390.5 852.1 L1391.5 850.1 L1392.5 847.5 L1393.5 844.4 L1394.5 840.7 L1395.5 836.6 L1396.5 832.1 L1397.5 827.1 L1398.5 821.9 L1399.5 816.3 L1400.5 810.6 L1401.5 804.7 L1402.5 798.7 L1403.5 792.7 L1404.5 786.8 L1405.5 780.9 L1406.5 775.3 L1407.5 769.8 L1408.5 764.7 L1409.5 759.9 L1410.5 755.6 L1411.5 751.6 L1412.5 748.2 L1413.5 745.3 L1414.5 743.0 L1415.5 741.2 L1416.5 740.1 L1417.5 739.5 L1418.5 739.6 L1419.5 740.4 L1420.5 741.7 L1421.5 743.6 L1422.5 746.2 L1423.5 749.2 L1424.5 752.8 L1425.5 756.9 L1426.5 761.4 L1427.5 766.3 L1428.5 771.6 L1429.5 777.1 L1430.5 782.8 L1431.5 788.7 L1432.5 794.6 L1433.5 800.6 L1434.5 806.6 L1435.5 812.5 L1436.5 818.1 L1437.5 823.6 L1438.5 828.8 L1439.5 833.6 L1440.5 838.0 L1441.5 842.0 L1442.5 845.5 L1443.5 848.4 L1444.5 850.8 L1445.5 852.6 L1446.5 853.8 L1447.5 854.4 L1448.5 854.4 L1449.5 853.7 L1450.5 852.5 L1451.5 850.6 L1452.5 848.1 L1453.5 845.1 L1454.5 841.6 L1455.5 837.5 L1456.5 833.1 L1457.5 828.2 L1458.5 823.0 L1459.5 817.5 L1460.5 811.8 L1461.5 806.0 L1462.5 800.0 L1463.5 794.0 L1464.5 788.0 L1465.5 782.2 L1466.5 776.5 L1467.5 771.0 L1468.5 765.8 L1469.5 760.9 L1470.5 756.5 L1471.5 752.4 L1472.5 748.9 L1473.5 745.9 L1474.5 743.4 L1475.5 741.5 L1476.5 740.3 L1477.5 739.6 L1478.5 739.6 L1479.5 740.2 L1480.5 741.4 L1481.5 743.2 L1482.5 745.6 L1483.5 748.5 L1484.5 752.0 L1485.5 756.0 L1486.5 760.4 L1487.5 765.2 L1488.5 770.4 L1489.5 775.9 L1490.5 781.5 L1491.5 787.4 L1492.5 793.4 L1493.5 799.4 L1494.5 805.3 L1495.5 811.2 L1496.5 816.9 L1497.5 822.4 L1498.5 827.7 L1499.5 832.6 L1500.5 837.1 L1501.5 841.2 L1502.5 844.8 L1503.5 847.8 L1504.5 850.4 L1505.5 852.3 L1506.5 853.6 L1507.5 854.4 L1508.5 854.5 L1509.5 853.9 L1510.5 852.8 L1511.5 851.0 L1512.5 848.7 L1513.5 845.8 L1514.5 842.4 L1515.5 838.4 L1516.5 834.1 L1517.5 829.3 L1518.5 824.2 L1519.5 818.7 L1520.5 813.1 L1521.5 807.2 L1522.5 801.3 L1523.5 795.3 L1524.5 789.3 L1525.5 783.4 L1526.5 777.7 L1527.5 772.1 L1528.5 766.9 L1529.5 761.9 L1530.5 757.4 L1531.5 753.3 L1532.5 749.6 L1533.5 746.5 L1534.5 743.9 L1535.5 741.9 L1536.5 740.5 L1537.5 739.7 L1538.5 739.5 L1539.5 740.0 L1540.5 741.1 L1541.5 742.7 L1542.5 745.0 L1543.5 747.9 L1544.5 751.2 L1545.5 755.1 L1546.5 759.4 L1547.5 764.2 L1548.5 769.3 L1549.5 774.7 L1550.5 780.3 L1551.5 786.1 L1552.5 792.1 L1553.5 798.1 L1554.5 804.1 L1555.5 810.0 L1556.5 815.7 L1557.5 821.3 L1558.5 826.6 L1559.5 831.6 L1560.5 836.2 L1561.5 840.3 L1562.5 844.0 L1563.5 847.2 L1564.5 849.9 L1565.5 851.9 L1566.5 853.4 L1567.5 854.3 L1568.5 854.5 L1569.5 854.1 L1570.5 853.1 L1571.5 851.5 L1572.5 849.3 L1573.5 846.5 L1574.5 843.2 L1575.5 839.3 L1576.5 835.0 L1577.5 830.3 L1578.5 825.3 L1579.5 819.9 L1580.5 814.3 L1581.5 808.5 L1582.5 802.6 L1583.5 796.6 L1584.5 790.6 L1585.5 784.7 L1586.5 778.9 L1587.5 773.3 L1588.5 768.0 L1589.5 763.0 L1590.5 758.3 L1591.5 754.1 L1592.5 750.3 L1593.5 747.1 L1594.5 744.4 L1595.5 742.3 L1596.5 740.7 L1597.5 739.8 L1598.5 739.5 L1599.5 739.8 L1600.5 740.8 L1601.5 742.3 L1602.5 744.5 L1603.5 747.2 L1604.5 750.5 L1605.5 754.2 L1606.5 758.5 L1607.5 763.1 L1608.5 768.2 L1609.5 773.5 L1610.5 779.1 L1611.5 784.9 L1612.5 790.8 L1613.5 796.8 L1614.5 802.8 L1615.5 808.7 L1616.5 814.5 L1617.5 820.1 L1618.5 825.5 L1619.5 830.5 L1620.5 835.2 L1621.5 839.5 L1622.5 843.3 L1623.5 846.6 L1624.5 849.3 L1625.5 851.5 L1626.5 853.1 L1627.5 854.1 L1628.5 854.5 L1629.5 854.2 L1630.5 853.4 L1631.5 851.9 L1632.5 849.8 L1633.5 847.1 L1634.5 843.9 L1635.5 840.2 L1636.5 836.0 L1637.5 831.4 L1638.5 826.4 L1639.5 821.1 L1640.5 815.5 L1641.5 809.8 L1642.5 803.8 L1643.5 797.9 L1644.5 791.9 L1645.5 785.9 L1646.5 780.1 L1647.5 774.5 L1648.5 769.1 L1649.5 764.0 L1650.5 759.3 L1651.5 755.0 L1652.5 751.1 L1653.5 747.7 L1654.5 744.9 L1655.5 742.7 L1656.5 741.0 L1657.5 739.9 L1658.5 739.5 L1659.5 739.7 L1660.5 740.5 L1661.5 741.9 L1662.5 744.0 L1663.5 746.6 L1664.5 749.7 L1665.5 753.4 L1666.5 757.5 L1667.5 762.1 L1668.5 767.1 L1669.5 772.3 L1670.5 777.9 L1671.5 783.6 L1672.5 789.5 L1673.5 795.5 L1674.5 801.5 L1675.5 807.4 L1676.5 813.3 L1677.5 818.9 L1678.5 824.3 L1679.5 829.5 L1680.5 834.2 L1681.5 838.6 L1682.5 842.5 L1683.5 845.9 L1684.5 848.8 L1685.5 851.1 L1686.5 852.8 L1687.5 854.0 L1688.5 854.5 L1689.5 854.3 L1690.5 853.6 L1691.5 852.2 L1692.5 850.3 L1693.5 847.7 L1694.5 844.6 L1695.5 841.0 L1696.5 836.9 L1697.5 832.4 L1698.5 827.5 L1699.5 822.3 L1700.5 816.7 L1701.5 811.0 L1702.5 805.1 L1703.5 799.1 L1704.5 793.1 L1705.5 787.2 L1706.5 781.3 L1707.5 775.7 L1708.5 770.2 L1709.5 765.1 L1710.5 760.3 L1711.5 755.9 L1712.5 751.9 L1713.5 748.4 L1714.5 745.5 L1715.5 743.1 L1716.5 741.3 L1717.5 740.1 L1718.5 739.6 L1719.5 739.6 L1720.5 740.3 L1721.5 741.6 L1722.5 743.5 L1723.5 746.0 L1724.5 749.0 L1725.5 752.6 L1726.5 756.6 L1727.5 761.1 L1728.5 766.0 L1729.5 771.2 L1730.5 776.7 L1731.5 782.4 L1732.5 788.2 L1733.5 794.2 L1734.5 800.2 L1735.5 806.2 L1736.5 812.0 L1737.5 817.7 L1738.5 823.2 L1739.5 828.4 L1740.5 833.2 L1741.5 837.7 L1742.5 841.7 L1743.5 845.2 L1744.5 848.2 L1745.5 850.7 L1746.5 852.5 L1747.5 853.8 L1748.5 854.4 L1749.5 854.4 L1750.5 853.8 L1751.5 852.6 L1752.5 850.7 L1753.5 848.3 L1754.5 845.3 L1755.5 841.8 L1756.5 837.8 L1757.5 833.4 L1758.5 828.6 L1759.5 823.4 L1760.5 817.9 L1761.5 812.2 L1762.5 806.4 L1763.5 800.4 L1764.5 794.4 L1765.5 788.5 L1766.5 782.6 L1767.5 776.9 L1768.5 771.4 L1769.5 766.1 L1770.5 761.3 L1771.5 756.8 L1772.5 752.7 L1773.5 749.1 L1774.5 746.1 L1775.5 743.6 L1776.5 741.6 L1777.5 740.3 L1778.5 739.6 L1779.5 739.5 L1780.5 740.1 L1781.5 741.3 L1782.5 743.0 L1783.5 745.4 L1784.5 748.3 L1785.5 751.8 L1786.5 755.7 L1787.5 760.1 L1788.5 764.9 L1789.5 770.0 L1790.5 775.5 L1791.5 781.1 L1792.5 787.0 L1793.5 792.9 L1794.5 798.9 L1795.5 804.9 L1796.5 810.8 L1797.5 816.5 L1798.5 822.1 L1799.5 827.3 L1800.5 832.2 L1801.5 836.8 L1802.5 840.9 L1803.5 844.5 L1804.5 847.6 L1805.5 850.2 L1806.5 852.2 L1807.5 853.6 L1808.5 854.3 L1809.5 854.5 L1810.5 854.0 L1811.5 852.9 L1812.5 851.2 L1813.5 848.9 L1814.5 846.0 L1815.5 842.6 L1816.5 838.7 L1817.5 834.4 L1818.5 829.6 L1819.5 824.5 L1820.5 819.1 L1821.5 813.5 L1822.5 807.7 L1823.5 801.7 L1824.5 795.7 L1825.5 789.7 L1826.5 783.8 L1827.5 778.1 L1828.5 772.5 L1829.5 767.2 L1830.5 762.3 L1831.5 757.7 L1832.5 753.5 L1833.5 749.8 L1834.5 746.7 L1835.5 744.1 L1836.5 742.0 L1837.5 740.6 L1838.5 739.7 L1839.5 739.5 L1840.5 739.9 L1841.5 741.0 L1842.5 742.6 L1843.5 744.8 L1844.5 747.6 L1845.5 751.0 L1846.5 754.8 L1847.5 759.1 L1848.5 763.8 L1849.5 768.9 L1850.5 774.3 L1851.5 779.9 L1852.5 785.7 L1853.5 791.7 L1854.5 797.6 L1855.5 803.6 L1856.5 809.5 L1857.5 815.3 L1858.5 820.9 L1859.5 826.2 L1860.5 831.2 L1861.5 835.8 L1862.5 840.0 L1863.5 843.8 L1864.5 847.0 L1865.5 849.7 L1866.5 851.8 L1867.5 853.3 L1868.5 854.2 L1869.5 854.5 L1870.5 854.2 L1871.5 853.2 L1872.5 851.6 L1873.5 849.4 L1874.5 846.7 L1875.5 843.4 L1876.5 839.6 L1877.5 835.4 L1878.5 830.7 L1879.5 825.7 L1880.5 820.3 L1881.5 814.7 L1882.5 808.9 L1883.5 803.0 L1884.5 797.0" fill="none" stroke="#0000ff" stroke-width="1" shape-rendering="crispEdges"/>
<line x1="1041.5" y1="854" x2="1041.5" y2="863" stroke="#b4b4b4" shape-rendering="crispEdges"/>
<text x="1041.5" y="877.5" font-size="16" fill="#b4b4b4" text-anchor="middle">0.0µs</text>
<line x1="1125.5" y1="854" x2="1125.5" y2="863" stroke="#b4b4b4" shape-rendering="crispEdges"/>
<text x="1125.5" y="877.5" font-size="16" fill="#b4b4b4" text-anchor="middle">0.2µs</text>
<line x1="1210.5" y1="854" x2="1210.5" y2="863" stroke="#b4b4b4" shape-rendering="crispEdges"/>
<text x="1210.5" y="877.5" font-size="16" fill="#b4b4b4" text-anchor="middle">0.4µs</text>
<line x1="1294.5" y1="854" x2="1294.5" y2="863" stroke="#b4b4b4" shape-rendering="crispEdges"/>
<text x="1294.5" y="877.5" font-size="16" fill="#b4b4b4" text-anchor="middle">0.6µs</text>
<line x1="1378.5" y1="854" x2="1378.5" y2="863" stroke="#b4b4b4" shape-rendering="crispEdges"/>
<text x="1378.5" y="877.5" font-size="16" fill="#b4b4b4" text-anchor="middle">0.8µs</text>
<line x1="1463.5" y1="854" x2="1463.5" y2="863" stroke="#b4b4b4" shape-rendering="crispEdges"/>
<text x="1463.5" y="877.5" font-size="16" fill="#b4b4b4" text-anchor="middle">1.0µs</text>
<line x1="1547.5" y1="854" x2="1547.5" y2="863" stroke="#b4b4b4" shape-rendering="crispEdges"/>
<text x="1547.5" y="877.5" font-size="16" fill="#b4b4b4" text-anchor="middle">1.2µs</text>
<line x1="1631.5" y1="854" x2="1631.5" y2="863" stroke="#b4b4b4" shape-rendering="crispEdges"/>
<text x="1631.5" y="877.5" font-size="16" fill="#b4b4b4" text-anchor="middle">1.4µs</text>
<line x1="1715.5" y1="854" x2="1715.5" y2="863" stroke="#b4b4b4" shape-rendering="crispEdges"/>
<text x="1715.5" y="877.5" font-size="16" fill="#b4b4b4" text-anchor="middle">1.6µs</text>
<line x1="1800.5" y1="854" x2="1800.5" y2="863" stroke="#b4b4b4" shape-rendering="crispEdges"/>
<text x="1800.5" y="877.5" font-size="16" fill="#b4b4b4" text-anchor="middle">1.8µs</text>
<line x1="1884.5" y1="854" x2="1884.5" y2="863" stroke="#b4b4b4" shape-rendering="crispEdges"/>
<text x="1884.5" y="877.5" font-size="16" fill="#b4b4b4" text-anchor="middle">2.0µs</text>
</svg>
</body></html>
